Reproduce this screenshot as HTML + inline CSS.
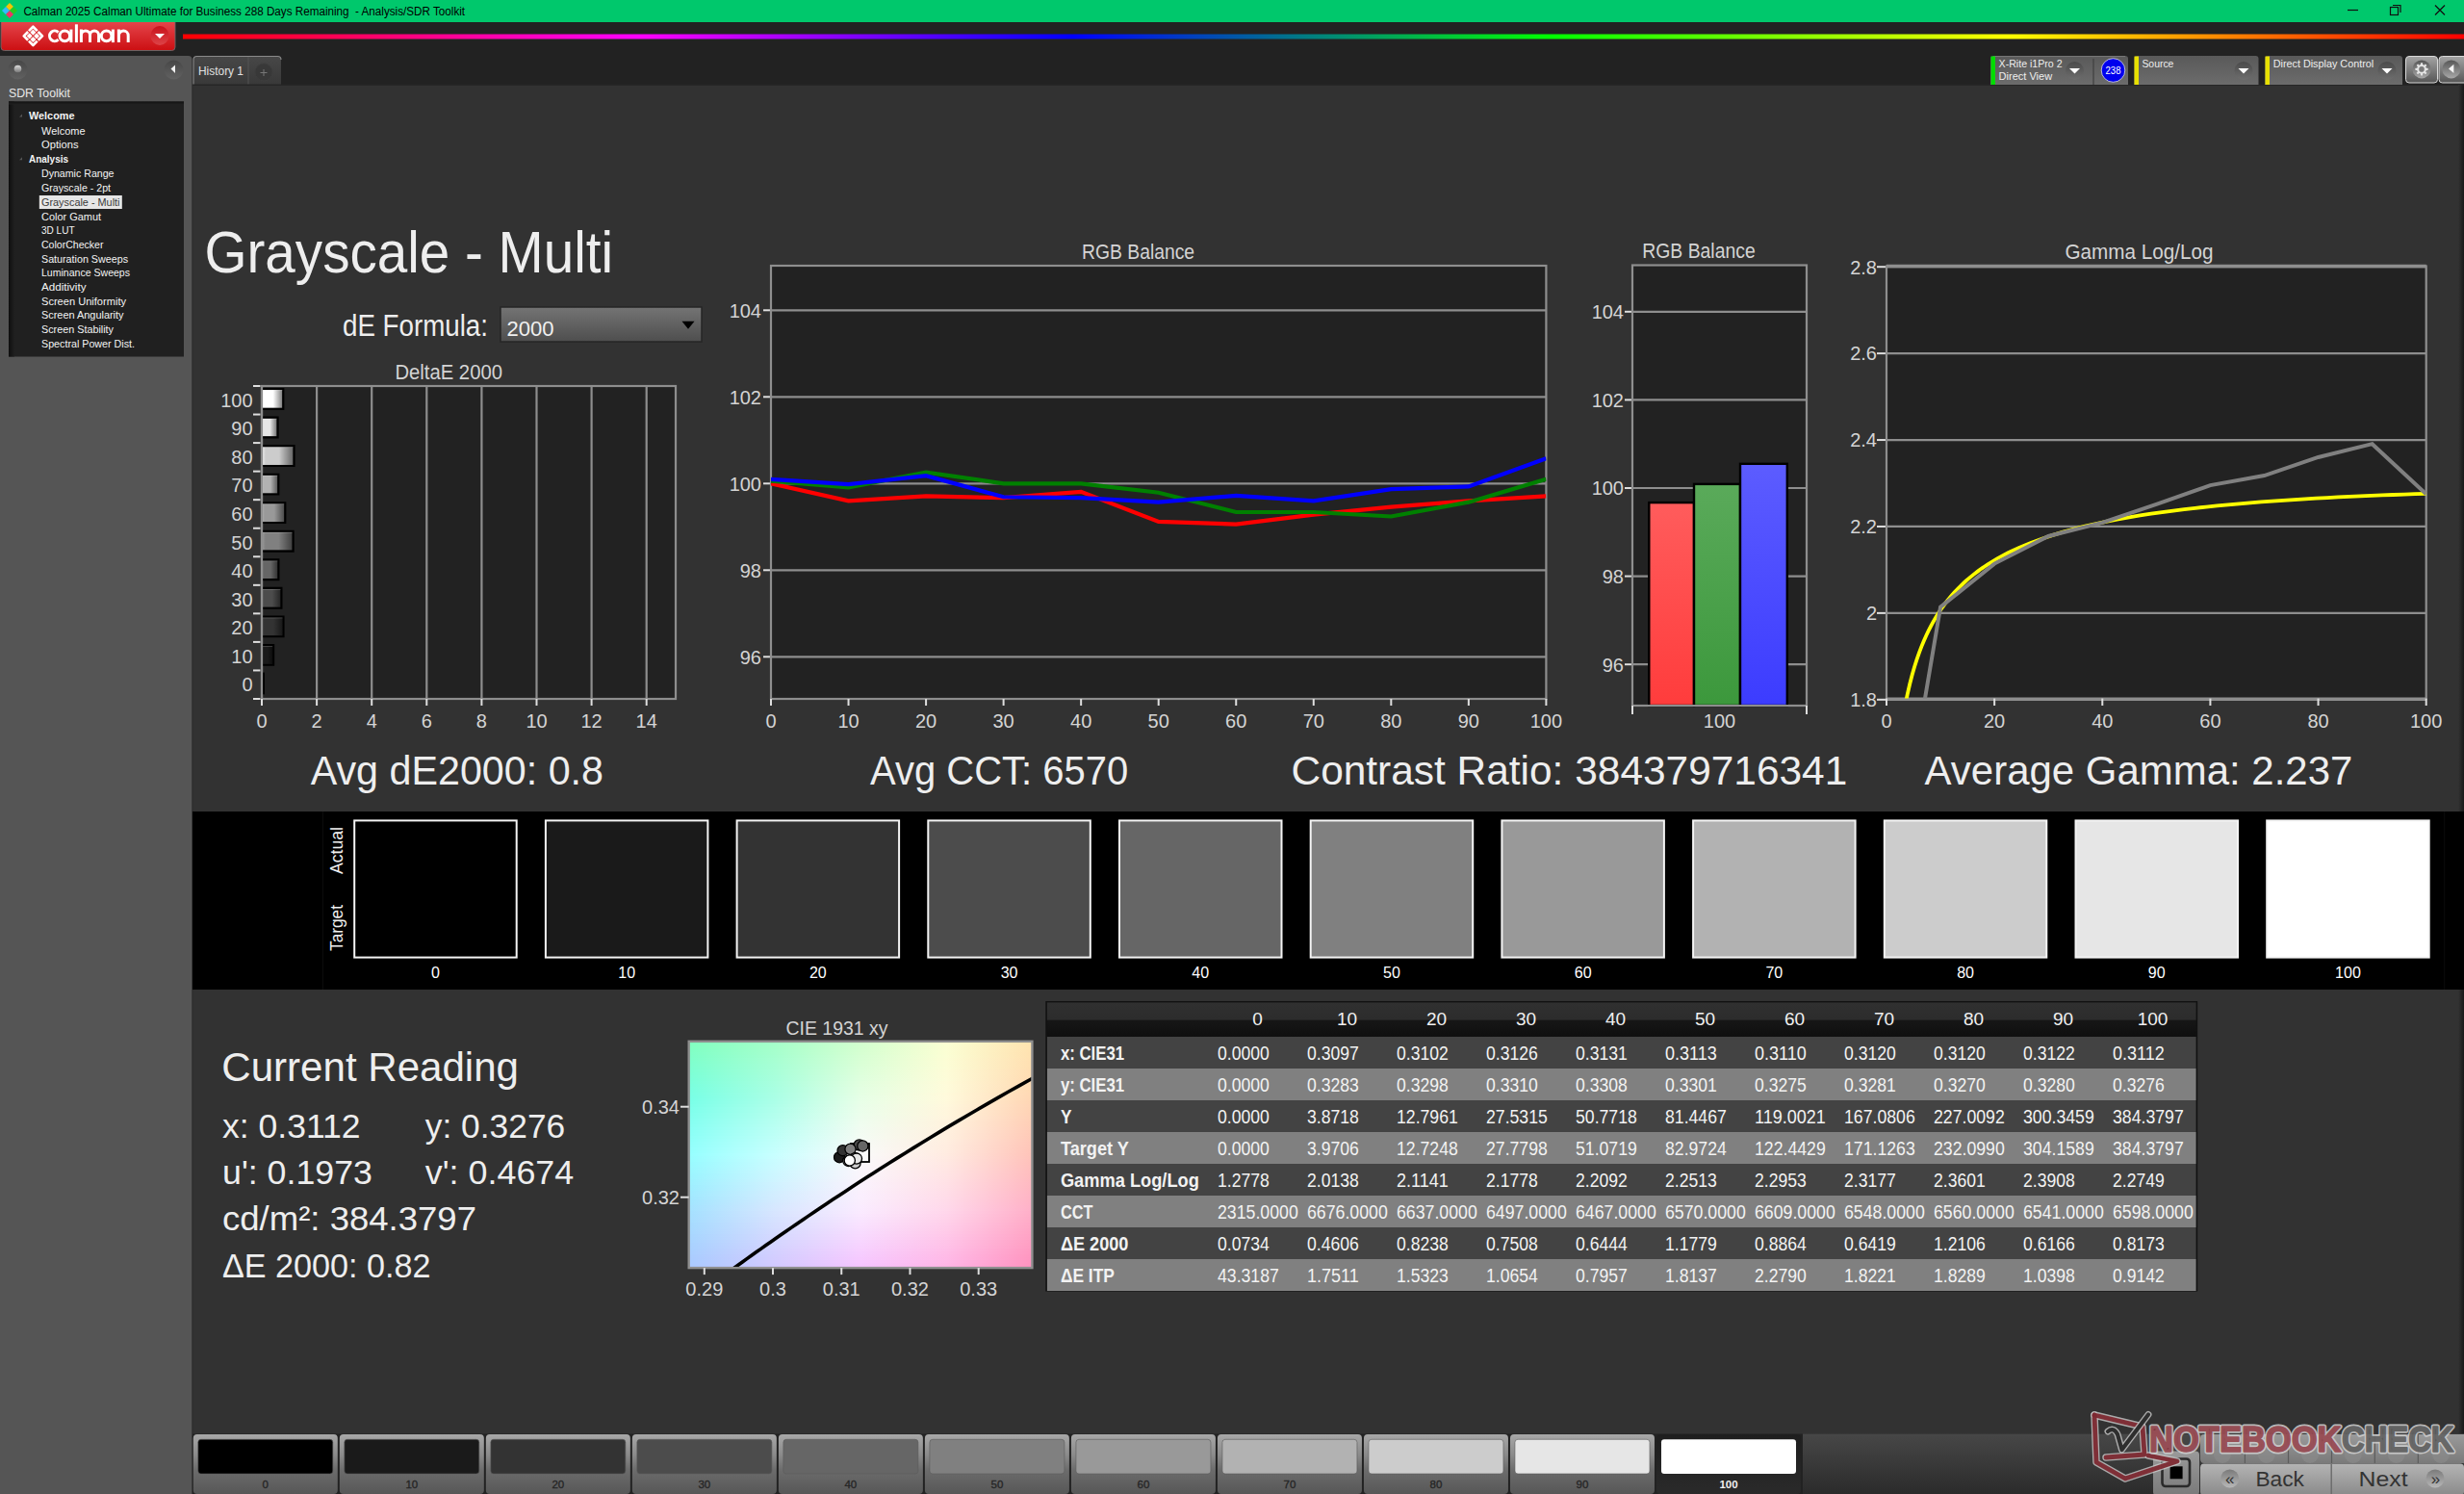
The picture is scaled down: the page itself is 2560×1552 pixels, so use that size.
<!DOCTYPE html><html><head><meta charset="utf-8"><style>html,body{margin:0;padding:0;background:#323232;overflow:hidden}svg{display:block}text{font-family:"Liberation Sans",sans-serif}</style></head><body><svg width="2560" height="1552" viewBox="0 0 2560 1552"><defs><linearGradient id="redbtn" x1="0" y1="0" x2="0" y2="1"><stop offset="0" stop-color="#e4444a"/><stop offset="1" stop-color="#cc0f12"/></linearGradient><linearGradient id="redcirc" x1="0" y1="0" x2="0" y2="1"><stop offset="0" stop-color="#c8101a"/><stop offset="1" stop-color="#dd4448"/></linearGradient><linearGradient id="rainbow" x1="0" y1="0" x2="1" y2="0"><stop offset="0" stop-color="#ff0000"/><stop offset="0.2" stop-color="#ff00ff"/><stop offset="0.39" stop-color="#0000ff"/><stop offset="0.6" stop-color="#00ff00"/><stop offset="0.8" stop-color="#ffff00"/><stop offset="1" stop-color="#ff0000"/></linearGradient><linearGradient id="sbcirc" x1="0" y1="0" x2="0" y2="1"><stop offset="0" stop-color="#474747"/><stop offset="1" stop-color="#616161"/></linearGradient><linearGradient id="sbdot" x1="0" y1="0" x2="0" y2="1"><stop offset="0" stop-color="#ddd"/><stop offset="1" stop-color="#777"/></linearGradient><linearGradient id="treeL" x1="0" y1="0" x2="1" y2="0"><stop offset="0" stop-color="#0e0e0e"/><stop offset="1" stop-color="#202020"/></linearGradient><linearGradient id="treeT" x1="0" y1="0" x2="0" y2="1"><stop offset="0" stop-color="#111"/><stop offset="1" stop-color="#202020"/></linearGradient><linearGradient id="tab" x1="0" y1="0" x2="0" y2="1"><stop offset="0" stop-color="#474747"/><stop offset="1" stop-color="#393939"/></linearGradient><linearGradient id="redge" x1="0" y1="0" x2="1" y2="0"><stop offset="0" stop-color="#323232"/><stop offset="1" stop-color="#181818"/></linearGradient><linearGradient id="panel" x1="0" y1="0" x2="0" y2="1"><stop offset="0" stop-color="#595959"/><stop offset="1" stop-color="#6c6c6c"/></linearGradient><linearGradient id="ddc" x1="0" y1="0" x2="0" y2="1"><stop offset="0" stop-color="#4a4a4a"/><stop offset="1" stop-color="#6e6e6e"/></linearGradient><linearGradient id="gbtn" x1="0" y1="0" x2="0" y2="1"><stop offset="0" stop-color="#a4a4a4"/><stop offset="1" stop-color="#565656"/></linearGradient><linearGradient id="gcirc" x1="0" y1="0" x2="0" y2="1"><stop offset="0" stop-color="#565656"/><stop offset="1" stop-color="#a8a8a8"/></linearGradient><linearGradient id="dd" x1="0" y1="0" x2="0" y2="1"><stop offset="0" stop-color="#747474"/><stop offset="1" stop-color="#4e4e4e"/></linearGradient><linearGradient id="bar0" x1="0" y1="0" x2="1" y2="0"><stop offset="0" stop-color="rgb(10,10,10)"/><stop offset="0.12" stop-color="rgb(0,0,0)"/><stop offset="0.55" stop-color="rgb(0,0,0)"/><stop offset="1" stop-color="rgb(0,0,0)"/></linearGradient><linearGradient id="bar1" x1="0" y1="0" x2="1" y2="0"><stop offset="0" stop-color="rgb(39,39,39)"/><stop offset="0.12" stop-color="rgb(26,26,26)"/><stop offset="0.55" stop-color="rgb(26,26,26)"/><stop offset="1" stop-color="rgb(13,13,13)"/></linearGradient><linearGradient id="bar2" x1="0" y1="0" x2="1" y2="0"><stop offset="0" stop-color="rgb(68,68,68)"/><stop offset="0.12" stop-color="rgb(51,51,51)"/><stop offset="0.55" stop-color="rgb(51,51,51)"/><stop offset="1" stop-color="rgb(25,25,25)"/></linearGradient><linearGradient id="bar3" x1="0" y1="0" x2="1" y2="0"><stop offset="0" stop-color="rgb(97,97,97)"/><stop offset="0.12" stop-color="rgb(76,76,76)"/><stop offset="0.55" stop-color="rgb(76,76,76)"/><stop offset="1" stop-color="rgb(38,38,38)"/></linearGradient><linearGradient id="bar4" x1="0" y1="0" x2="1" y2="0"><stop offset="0" stop-color="rgb(127,127,127)"/><stop offset="0.12" stop-color="rgb(102,102,102)"/><stop offset="0.55" stop-color="rgb(102,102,102)"/><stop offset="1" stop-color="rgb(51,51,51)"/></linearGradient><linearGradient id="bar5" x1="0" y1="0" x2="1" y2="0"><stop offset="0" stop-color="rgb(157,157,157)"/><stop offset="0.12" stop-color="rgb(128,128,128)"/><stop offset="0.55" stop-color="rgb(128,128,128)"/><stop offset="1" stop-color="rgb(64,64,64)"/></linearGradient><linearGradient id="bar6" x1="0" y1="0" x2="1" y2="0"><stop offset="0" stop-color="rgb(185,185,185)"/><stop offset="0.12" stop-color="rgb(153,153,153)"/><stop offset="0.55" stop-color="rgb(153,153,153)"/><stop offset="1" stop-color="rgb(76,76,76)"/></linearGradient><linearGradient id="bar7" x1="0" y1="0" x2="1" y2="0"><stop offset="0" stop-color="rgb(214,214,214)"/><stop offset="0.12" stop-color="rgb(178,178,178)"/><stop offset="0.55" stop-color="rgb(178,178,178)"/><stop offset="1" stop-color="rgb(89,89,89)"/></linearGradient><linearGradient id="bar8" x1="0" y1="0" x2="1" y2="0"><stop offset="0" stop-color="rgb(244,244,244)"/><stop offset="0.12" stop-color="rgb(204,204,204)"/><stop offset="0.55" stop-color="rgb(204,204,204)"/><stop offset="1" stop-color="rgb(102,102,102)"/></linearGradient><linearGradient id="bar9" x1="0" y1="0" x2="1" y2="0"><stop offset="0" stop-color="rgb(255,255,255)"/><stop offset="0.12" stop-color="rgb(230,230,230)"/><stop offset="0.55" stop-color="rgb(230,230,230)"/><stop offset="1" stop-color="rgb(115,115,115)"/></linearGradient><linearGradient id="bar10" x1="0" y1="0" x2="1" y2="0"><stop offset="0" stop-color="rgb(255,255,255)"/><stop offset="0.12" stop-color="rgb(255,255,255)"/><stop offset="0.55" stop-color="rgb(255,255,255)"/><stop offset="1" stop-color="rgb(127,127,127)"/></linearGradient><clipPath id="cliprgb"><rect x="801" y="276" width="805.4000000000001" height="450"/></clipPath><linearGradient id="rb" x1="0" y1="0" x2="0" y2="1"><stop offset="0" stop-color="#ff5c5c"/><stop offset="1" stop-color="#ff3c3c"/></linearGradient><linearGradient id="gb" x1="0" y1="0" x2="0" y2="1"><stop offset="0" stop-color="#5aaa5a"/><stop offset="1" stop-color="#3c983c"/></linearGradient><linearGradient id="bb" x1="0" y1="0" x2="0" y2="1"><stop offset="0" stop-color="#5c5cff"/><stop offset="1" stop-color="#3c3cff"/></linearGradient><clipPath id="clipg"><rect x="1960" y="276.5" width="560.6999999999998" height="449.1"/></clipPath><clipPath id="clipcie"><rect x="715.7" y="1081.8" width="356.70000000000005" height="235.29999999999995"/></clipPath><linearGradient id="cie0" x1="0" y1="0" x2="1" y2="0"><stop offset="0.0" stop-color="rgb(130,255,190)"/><stop offset="0.25" stop-color="rgb(165,255,200)"/><stop offset="0.5" stop-color="rgb(210,255,205)"/><stop offset="0.75" stop-color="rgb(250,255,210)"/><stop offset="1.0" stop-color="rgb(255,228,175)"/></linearGradient><linearGradient id="cie1" x1="0" y1="0" x2="1" y2="0"><stop offset="0.0" stop-color="rgb(129,255,193)"/><stop offset="0.25" stop-color="rgb(165,255,202)"/><stop offset="0.5" stop-color="rgb(211,255,207)"/><stop offset="0.75" stop-color="rgb(250,255,211)"/><stop offset="1.0" stop-color="rgb(255,227,175)"/></linearGradient><linearGradient id="cie2" x1="0" y1="0" x2="1" y2="0"><stop offset="0.0" stop-color="rgb(129,255,195)"/><stop offset="0.25" stop-color="rgb(166,255,203)"/><stop offset="0.5" stop-color="rgb(212,255,208)"/><stop offset="0.75" stop-color="rgb(251,254,211)"/><stop offset="1.0" stop-color="rgb(255,227,176)"/></linearGradient><linearGradient id="cie3" x1="0" y1="0" x2="1" y2="0"><stop offset="0.0" stop-color="rgb(128,255,197)"/><stop offset="0.25" stop-color="rgb(166,255,205)"/><stop offset="0.5" stop-color="rgb(213,255,209)"/><stop offset="0.75" stop-color="rgb(251,254,212)"/><stop offset="1.0" stop-color="rgb(255,226,176)"/></linearGradient><linearGradient id="cie4" x1="0" y1="0" x2="1" y2="0"><stop offset="0.0" stop-color="rgb(128,255,199)"/><stop offset="0.25" stop-color="rgb(166,255,206)"/><stop offset="0.5" stop-color="rgb(214,255,210)"/><stop offset="0.75" stop-color="rgb(251,254,212)"/><stop offset="1.0" stop-color="rgb(255,225,176)"/></linearGradient><linearGradient id="cie5" x1="0" y1="0" x2="1" y2="0"><stop offset="0.0" stop-color="rgb(127,255,201)"/><stop offset="0.25" stop-color="rgb(166,255,208)"/><stop offset="0.5" stop-color="rgb(215,255,212)"/><stop offset="0.75" stop-color="rgb(251,254,213)"/><stop offset="1.0" stop-color="rgb(255,225,176)"/></linearGradient><linearGradient id="cie6" x1="0" y1="0" x2="1" y2="0"><stop offset="0.0" stop-color="rgb(127,255,203)"/><stop offset="0.25" stop-color="rgb(167,255,210)"/><stop offset="0.5" stop-color="rgb(216,255,213)"/><stop offset="0.75" stop-color="rgb(252,253,213)"/><stop offset="1.0" stop-color="rgb(255,224,177)"/></linearGradient><linearGradient id="cie7" x1="0" y1="0" x2="1" y2="0"><stop offset="0.0" stop-color="rgb(126,255,205)"/><stop offset="0.25" stop-color="rgb(167,255,211)"/><stop offset="0.5" stop-color="rgb(217,255,214)"/><stop offset="0.75" stop-color="rgb(252,253,214)"/><stop offset="1.0" stop-color="rgb(255,223,177)"/></linearGradient><linearGradient id="cie8" x1="0" y1="0" x2="1" y2="0"><stop offset="0.0" stop-color="rgb(126,255,207)"/><stop offset="0.25" stop-color="rgb(167,255,213)"/><stop offset="0.5" stop-color="rgb(218,255,215)"/><stop offset="0.75" stop-color="rgb(252,253,214)"/><stop offset="1.0" stop-color="rgb(255,223,177)"/></linearGradient><linearGradient id="cie9" x1="0" y1="0" x2="1" y2="0"><stop offset="0.0" stop-color="rgb(125,255,209)"/><stop offset="0.25" stop-color="rgb(167,255,214)"/><stop offset="0.5" stop-color="rgb(219,255,217)"/><stop offset="0.75" stop-color="rgb(252,253,215)"/><stop offset="1.0" stop-color="rgb(255,222,177)"/></linearGradient><linearGradient id="cie10" x1="0" y1="0" x2="1" y2="0"><stop offset="0.0" stop-color="rgb(125,255,211)"/><stop offset="0.25" stop-color="rgb(168,255,216)"/><stop offset="0.5" stop-color="rgb(220,255,218)"/><stop offset="0.75" stop-color="rgb(253,252,215)"/><stop offset="1.0" stop-color="rgb(255,221,178)"/></linearGradient><linearGradient id="cie11" x1="0" y1="0" x2="1" y2="0"><stop offset="0.0" stop-color="rgb(124,255,213)"/><stop offset="0.25" stop-color="rgb(168,255,217)"/><stop offset="0.5" stop-color="rgb(221,255,219)"/><stop offset="0.75" stop-color="rgb(253,252,216)"/><stop offset="1.0" stop-color="rgb(255,221,178)"/></linearGradient><linearGradient id="cie12" x1="0" y1="0" x2="1" y2="0"><stop offset="0.0" stop-color="rgb(124,255,215)"/><stop offset="0.25" stop-color="rgb(168,255,219)"/><stop offset="0.5" stop-color="rgb(222,255,221)"/><stop offset="0.75" stop-color="rgb(253,252,216)"/><stop offset="1.0" stop-color="rgb(255,220,178)"/></linearGradient><linearGradient id="cie13" x1="0" y1="0" x2="1" y2="0"><stop offset="0.0" stop-color="rgb(123,255,217)"/><stop offset="0.25" stop-color="rgb(168,255,220)"/><stop offset="0.5" stop-color="rgb(223,255,222)"/><stop offset="0.75" stop-color="rgb(253,252,217)"/><stop offset="1.0" stop-color="rgb(255,219,178)"/></linearGradient><linearGradient id="cie14" x1="0" y1="0" x2="1" y2="0"><stop offset="0.0" stop-color="rgb(123,255,219)"/><stop offset="0.25" stop-color="rgb(169,255,222)"/><stop offset="0.5" stop-color="rgb(225,255,223)"/><stop offset="0.75" stop-color="rgb(254,251,217)"/><stop offset="1.0" stop-color="rgb(255,219,179)"/></linearGradient><linearGradient id="cie15" x1="0" y1="0" x2="1" y2="0"><stop offset="0.0" stop-color="rgb(122,255,221)"/><stop offset="0.25" stop-color="rgb(169,255,223)"/><stop offset="0.5" stop-color="rgb(226,255,224)"/><stop offset="0.75" stop-color="rgb(254,251,218)"/><stop offset="1.0" stop-color="rgb(255,218,179)"/></linearGradient><linearGradient id="cie16" x1="0" y1="0" x2="1" y2="0"><stop offset="0.0" stop-color="rgb(122,255,223)"/><stop offset="0.25" stop-color="rgb(169,255,225)"/><stop offset="0.5" stop-color="rgb(227,255,226)"/><stop offset="0.75" stop-color="rgb(254,251,218)"/><stop offset="1.0" stop-color="rgb(255,217,179)"/></linearGradient><linearGradient id="cie17" x1="0" y1="0" x2="1" y2="0"><stop offset="0.0" stop-color="rgb(121,255,225)"/><stop offset="0.25" stop-color="rgb(169,255,226)"/><stop offset="0.5" stop-color="rgb(228,255,227)"/><stop offset="0.75" stop-color="rgb(254,251,219)"/><stop offset="1.0" stop-color="rgb(255,217,179)"/></linearGradient><linearGradient id="cie18" x1="0" y1="0" x2="1" y2="0"><stop offset="0.0" stop-color="rgb(121,255,227)"/><stop offset="0.25" stop-color="rgb(170,255,228)"/><stop offset="0.5" stop-color="rgb(229,255,228)"/><stop offset="0.75" stop-color="rgb(255,250,219)"/><stop offset="1.0" stop-color="rgb(255,216,180)"/></linearGradient><linearGradient id="cie19" x1="0" y1="0" x2="1" y2="0"><stop offset="0.0" stop-color="rgb(120,255,229)"/><stop offset="0.25" stop-color="rgb(170,255,229)"/><stop offset="0.5" stop-color="rgb(230,255,230)"/><stop offset="0.75" stop-color="rgb(255,250,220)"/><stop offset="1.0" stop-color="rgb(255,215,180)"/></linearGradient><linearGradient id="cie20" x1="0" y1="0" x2="1" y2="0"><stop offset="0.0" stop-color="rgb(121,255,231)"/><stop offset="0.25" stop-color="rgb(171,255,231)"/><stop offset="0.5" stop-color="rgb(231,255,231)"/><stop offset="0.75" stop-color="rgb(255,250,220)"/><stop offset="1.0" stop-color="rgb(255,214,180)"/></linearGradient><linearGradient id="cie21" x1="0" y1="0" x2="1" y2="0"><stop offset="0.0" stop-color="rgb(122,255,232)"/><stop offset="0.25" stop-color="rgb(172,255,232)"/><stop offset="0.5" stop-color="rgb(232,255,232)"/><stop offset="0.75" stop-color="rgb(255,249,220)"/><stop offset="1.0" stop-color="rgb(255,213,180)"/></linearGradient><linearGradient id="cie22" x1="0" y1="0" x2="1" y2="0"><stop offset="0.0" stop-color="rgb(124,255,233)"/><stop offset="0.25" stop-color="rgb(174,255,233)"/><stop offset="0.5" stop-color="rgb(233,254,233)"/><stop offset="0.75" stop-color="rgb(255,248,221)"/><stop offset="1.0" stop-color="rgb(255,212,181)"/></linearGradient><linearGradient id="cie23" x1="0" y1="0" x2="1" y2="0"><stop offset="0.0" stop-color="rgb(126,255,235)"/><stop offset="0.25" stop-color="rgb(176,255,235)"/><stop offset="0.5" stop-color="rgb(234,254,234)"/><stop offset="0.75" stop-color="rgb(255,247,221)"/><stop offset="1.0" stop-color="rgb(255,211,181)"/></linearGradient><linearGradient id="cie24" x1="0" y1="0" x2="1" y2="0"><stop offset="0.0" stop-color="rgb(127,255,236)"/><stop offset="0.25" stop-color="rgb(177,255,236)"/><stop offset="0.5" stop-color="rgb(235,254,235)"/><stop offset="0.75" stop-color="rgb(255,246,221)"/><stop offset="1.0" stop-color="rgb(255,210,181)"/></linearGradient><linearGradient id="cie25" x1="0" y1="0" x2="1" y2="0"><stop offset="0.0" stop-color="rgb(129,255,237)"/><stop offset="0.25" stop-color="rgb(179,255,237)"/><stop offset="0.5" stop-color="rgb(236,254,236)"/><stop offset="0.75" stop-color="rgb(255,246,221)"/><stop offset="1.0" stop-color="rgb(255,209,181)"/></linearGradient><linearGradient id="cie26" x1="0" y1="0" x2="1" y2="0"><stop offset="0.0" stop-color="rgb(130,255,238)"/><stop offset="0.25" stop-color="rgb(180,255,238)"/><stop offset="0.5" stop-color="rgb(237,253,237)"/><stop offset="0.75" stop-color="rgb(255,245,222)"/><stop offset="1.0" stop-color="rgb(255,208,182)"/></linearGradient><linearGradient id="cie27" x1="0" y1="0" x2="1" y2="0"><stop offset="0.0" stop-color="rgb(132,255,240)"/><stop offset="0.25" stop-color="rgb(182,255,240)"/><stop offset="0.5" stop-color="rgb(238,253,238)"/><stop offset="0.75" stop-color="rgb(255,244,222)"/><stop offset="1.0" stop-color="rgb(255,207,182)"/></linearGradient><linearGradient id="cie28" x1="0" y1="0" x2="1" y2="0"><stop offset="0.0" stop-color="rgb(133,255,241)"/><stop offset="0.25" stop-color="rgb(183,255,241)"/><stop offset="0.5" stop-color="rgb(239,253,239)"/><stop offset="0.75" stop-color="rgb(255,243,222)"/><stop offset="1.0" stop-color="rgb(255,206,182)"/></linearGradient><linearGradient id="cie29" x1="0" y1="0" x2="1" y2="0"><stop offset="0.0" stop-color="rgb(135,255,242)"/><stop offset="0.25" stop-color="rgb(185,255,242)"/><stop offset="0.5" stop-color="rgb(240,253,240)"/><stop offset="0.75" stop-color="rgb(255,243,222)"/><stop offset="1.0" stop-color="rgb(255,205,182)"/></linearGradient><linearGradient id="cie30" x1="0" y1="0" x2="1" y2="0"><stop offset="0.0" stop-color="rgb(136,255,244)"/><stop offset="0.25" stop-color="rgb(186,255,244)"/><stop offset="0.5" stop-color="rgb(241,252,241)"/><stop offset="0.75" stop-color="rgb(255,242,223)"/><stop offset="1.0" stop-color="rgb(255,204,183)"/></linearGradient><linearGradient id="cie31" x1="0" y1="0" x2="1" y2="0"><stop offset="0.0" stop-color="rgb(138,255,245)"/><stop offset="0.25" stop-color="rgb(188,255,245)"/><stop offset="0.5" stop-color="rgb(242,252,242)"/><stop offset="0.75" stop-color="rgb(255,241,223)"/><stop offset="1.0" stop-color="rgb(255,203,183)"/></linearGradient><linearGradient id="cie32" x1="0" y1="0" x2="1" y2="0"><stop offset="0.0" stop-color="rgb(139,255,246)"/><stop offset="0.25" stop-color="rgb(189,255,246)"/><stop offset="0.5" stop-color="rgb(243,252,243)"/><stop offset="0.75" stop-color="rgb(255,240,223)"/><stop offset="1.0" stop-color="rgb(255,202,183)"/></linearGradient><linearGradient id="cie33" x1="0" y1="0" x2="1" y2="0"><stop offset="0.0" stop-color="rgb(141,255,247)"/><stop offset="0.25" stop-color="rgb(191,255,247)"/><stop offset="0.5" stop-color="rgb(244,252,244)"/><stop offset="0.75" stop-color="rgb(255,240,223)"/><stop offset="1.0" stop-color="rgb(255,201,183)"/></linearGradient><linearGradient id="cie34" x1="0" y1="0" x2="1" y2="0"><stop offset="0.0" stop-color="rgb(142,255,249)"/><stop offset="0.25" stop-color="rgb(192,255,249)"/><stop offset="0.5" stop-color="rgb(245,251,245)"/><stop offset="0.75" stop-color="rgb(255,239,224)"/><stop offset="1.0" stop-color="rgb(255,200,184)"/></linearGradient><linearGradient id="cie35" x1="0" y1="0" x2="1" y2="0"><stop offset="0.0" stop-color="rgb(144,255,250)"/><stop offset="0.25" stop-color="rgb(194,255,250)"/><stop offset="0.5" stop-color="rgb(246,251,246)"/><stop offset="0.75" stop-color="rgb(255,238,224)"/><stop offset="1.0" stop-color="rgb(255,199,184)"/></linearGradient><linearGradient id="cie36" x1="0" y1="0" x2="1" y2="0"><stop offset="0.0" stop-color="rgb(145,255,251)"/><stop offset="0.25" stop-color="rgb(195,255,251)"/><stop offset="0.5" stop-color="rgb(247,251,247)"/><stop offset="0.75" stop-color="rgb(255,237,224)"/><stop offset="1.0" stop-color="rgb(255,198,184)"/></linearGradient><linearGradient id="cie37" x1="0" y1="0" x2="1" y2="0"><stop offset="0.0" stop-color="rgb(147,255,252)"/><stop offset="0.25" stop-color="rgb(197,255,252)"/><stop offset="0.5" stop-color="rgb(248,251,248)"/><stop offset="0.75" stop-color="rgb(255,237,224)"/><stop offset="1.0" stop-color="rgb(255,197,184)"/></linearGradient><linearGradient id="cie38" x1="0" y1="0" x2="1" y2="0"><stop offset="0.0" stop-color="rgb(148,255,254)"/><stop offset="0.25" stop-color="rgb(198,255,254)"/><stop offset="0.5" stop-color="rgb(249,250,249)"/><stop offset="0.75" stop-color="rgb(255,236,225)"/><stop offset="1.0" stop-color="rgb(255,196,185)"/></linearGradient><linearGradient id="cie39" x1="0" y1="0" x2="1" y2="0"><stop offset="0.0" stop-color="rgb(150,255,255)"/><stop offset="0.25" stop-color="rgb(200,255,255)"/><stop offset="0.5" stop-color="rgb(250,250,250)"/><stop offset="0.75" stop-color="rgb(255,235,225)"/><stop offset="1.0" stop-color="rgb(255,195,185)"/></linearGradient><linearGradient id="cie40" x1="0" y1="0" x2="1" y2="0"><stop offset="0.0" stop-color="rgb(151,253,255)"/><stop offset="0.25" stop-color="rgb(201,254,255)"/><stop offset="0.5" stop-color="rgb(250,249,250)"/><stop offset="0.75" stop-color="rgb(255,234,226)"/><stop offset="1.0" stop-color="rgb(255,194,186)"/></linearGradient><linearGradient id="cie41" x1="0" y1="0" x2="1" y2="0"><stop offset="0.0" stop-color="rgb(152,252,255)"/><stop offset="0.25" stop-color="rgb(202,252,255)"/><stop offset="0.5" stop-color="rgb(250,248,251)"/><stop offset="0.75" stop-color="rgb(255,233,226)"/><stop offset="1.0" stop-color="rgb(255,193,187)"/></linearGradient><linearGradient id="cie42" x1="0" y1="0" x2="1" y2="0"><stop offset="0.0" stop-color="rgb(152,250,255)"/><stop offset="0.25" stop-color="rgb(202,251,255)"/><stop offset="0.5" stop-color="rgb(250,248,251)"/><stop offset="0.75" stop-color="rgb(255,232,227)"/><stop offset="1.0" stop-color="rgb(255,192,187)"/></linearGradient><linearGradient id="cie43" x1="0" y1="0" x2="1" y2="0"><stop offset="0.0" stop-color="rgb(153,249,255)"/><stop offset="0.25" stop-color="rgb(203,250,255)"/><stop offset="0.5" stop-color="rgb(250,247,251)"/><stop offset="0.75" stop-color="rgb(255,231,227)"/><stop offset="1.0" stop-color="rgb(255,191,188)"/></linearGradient><linearGradient id="cie44" x1="0" y1="0" x2="1" y2="0"><stop offset="0.0" stop-color="rgb(154,247,255)"/><stop offset="0.25" stop-color="rgb(204,249,255)"/><stop offset="0.5" stop-color="rgb(250,246,251)"/><stop offset="0.75" stop-color="rgb(255,230,228)"/><stop offset="1.0" stop-color="rgb(255,190,189)"/></linearGradient><linearGradient id="cie45" x1="0" y1="0" x2="1" y2="0"><stop offset="0.0" stop-color="rgb(155,246,255)"/><stop offset="0.25" stop-color="rgb(205,247,255)"/><stop offset="0.5" stop-color="rgb(250,245,252)"/><stop offset="0.75" stop-color="rgb(255,229,228)"/><stop offset="1.0" stop-color="rgb(255,189,190)"/></linearGradient><linearGradient id="cie46" x1="0" y1="0" x2="1" y2="0"><stop offset="0.0" stop-color="rgb(155,244,255)"/><stop offset="0.25" stop-color="rgb(205,246,255)"/><stop offset="0.5" stop-color="rgb(250,245,252)"/><stop offset="0.75" stop-color="rgb(255,228,229)"/><stop offset="1.0" stop-color="rgb(255,188,190)"/></linearGradient><linearGradient id="cie47" x1="0" y1="0" x2="1" y2="0"><stop offset="0.0" stop-color="rgb(156,243,255)"/><stop offset="0.25" stop-color="rgb(206,245,255)"/><stop offset="0.5" stop-color="rgb(250,244,252)"/><stop offset="0.75" stop-color="rgb(255,227,229)"/><stop offset="1.0" stop-color="rgb(255,187,191)"/></linearGradient><linearGradient id="cie48" x1="0" y1="0" x2="1" y2="0"><stop offset="0.0" stop-color="rgb(157,241,255)"/><stop offset="0.25" stop-color="rgb(207,244,255)"/><stop offset="0.5" stop-color="rgb(250,243,252)"/><stop offset="0.75" stop-color="rgb(255,226,230)"/><stop offset="1.0" stop-color="rgb(255,186,192)"/></linearGradient><linearGradient id="cie49" x1="0" y1="0" x2="1" y2="0"><stop offset="0.0" stop-color="rgb(158,240,255)"/><stop offset="0.25" stop-color="rgb(208,242,255)"/><stop offset="0.5" stop-color="rgb(250,242,253)"/><stop offset="0.75" stop-color="rgb(255,225,230)"/><stop offset="1.0" stop-color="rgb(255,185,193)"/></linearGradient><linearGradient id="cie50" x1="0" y1="0" x2="1" y2="0"><stop offset="0.0" stop-color="rgb(158,238,255)"/><stop offset="0.25" stop-color="rgb(208,241,255)"/><stop offset="0.5" stop-color="rgb(250,242,253)"/><stop offset="0.75" stop-color="rgb(255,224,231)"/><stop offset="1.0" stop-color="rgb(255,184,193)"/></linearGradient><linearGradient id="cie51" x1="0" y1="0" x2="1" y2="0"><stop offset="0.0" stop-color="rgb(159,237,255)"/><stop offset="0.25" stop-color="rgb(209,240,255)"/><stop offset="0.5" stop-color="rgb(250,241,253)"/><stop offset="0.75" stop-color="rgb(255,223,231)"/><stop offset="1.0" stop-color="rgb(255,183,194)"/></linearGradient><linearGradient id="cie52" x1="0" y1="0" x2="1" y2="0"><stop offset="0.0" stop-color="rgb(160,235,255)"/><stop offset="0.25" stop-color="rgb(210,238,255)"/><stop offset="0.5" stop-color="rgb(250,240,253)"/><stop offset="0.75" stop-color="rgb(255,222,232)"/><stop offset="1.0" stop-color="rgb(255,182,195)"/></linearGradient><linearGradient id="cie53" x1="0" y1="0" x2="1" y2="0"><stop offset="0.0" stop-color="rgb(161,234,255)"/><stop offset="0.25" stop-color="rgb(211,237,255)"/><stop offset="0.5" stop-color="rgb(250,239,254)"/><stop offset="0.75" stop-color="rgb(255,221,232)"/><stop offset="1.0" stop-color="rgb(255,181,196)"/></linearGradient><linearGradient id="cie54" x1="0" y1="0" x2="1" y2="0"><stop offset="0.0" stop-color="rgb(161,232,255)"/><stop offset="0.25" stop-color="rgb(211,236,255)"/><stop offset="0.5" stop-color="rgb(250,239,254)"/><stop offset="0.75" stop-color="rgb(255,220,233)"/><stop offset="1.0" stop-color="rgb(255,180,196)"/></linearGradient><linearGradient id="cie55" x1="0" y1="0" x2="1" y2="0"><stop offset="0.0" stop-color="rgb(162,230,255)"/><stop offset="0.25" stop-color="rgb(212,235,255)"/><stop offset="0.5" stop-color="rgb(250,238,254)"/><stop offset="0.75" stop-color="rgb(255,219,233)"/><stop offset="1.0" stop-color="rgb(255,179,197)"/></linearGradient><linearGradient id="cie56" x1="0" y1="0" x2="1" y2="0"><stop offset="0.0" stop-color="rgb(163,229,255)"/><stop offset="0.25" stop-color="rgb(213,233,255)"/><stop offset="0.5" stop-color="rgb(250,237,254)"/><stop offset="0.75" stop-color="rgb(255,218,234)"/><stop offset="1.0" stop-color="rgb(255,178,198)"/></linearGradient><linearGradient id="cie57" x1="0" y1="0" x2="1" y2="0"><stop offset="0.0" stop-color="rgb(164,227,255)"/><stop offset="0.25" stop-color="rgb(214,232,255)"/><stop offset="0.5" stop-color="rgb(250,236,255)"/><stop offset="0.75" stop-color="rgb(255,217,234)"/><stop offset="1.0" stop-color="rgb(255,177,199)"/></linearGradient><linearGradient id="cie58" x1="0" y1="0" x2="1" y2="0"><stop offset="0.0" stop-color="rgb(165,226,255)"/><stop offset="0.25" stop-color="rgb(215,231,255)"/><stop offset="0.5" stop-color="rgb(250,235,255)"/><stop offset="0.75" stop-color="rgb(255,216,235)"/><stop offset="1.0" stop-color="rgb(255,176,200)"/></linearGradient><linearGradient id="cie59" x1="0" y1="0" x2="1" y2="0"><stop offset="0.0" stop-color="rgb(165,224,255)"/><stop offset="0.25" stop-color="rgb(215,229,255)"/><stop offset="0.5" stop-color="rgb(250,234,255)"/><stop offset="0.75" stop-color="rgb(255,214,235)"/><stop offset="1.0" stop-color="rgb(255,174,200)"/></linearGradient><linearGradient id="cie60" x1="0" y1="0" x2="1" y2="0"><stop offset="0.0" stop-color="rgb(165,223,255)"/><stop offset="0.25" stop-color="rgb(215,228,255)"/><stop offset="0.5" stop-color="rgb(250,232,255)"/><stop offset="0.75" stop-color="rgb(255,212,235)"/><stop offset="1.0" stop-color="rgb(255,173,199)"/></linearGradient><linearGradient id="cie61" x1="0" y1="0" x2="1" y2="0"><stop offset="0.0" stop-color="rgb(166,222,255)"/><stop offset="0.25" stop-color="rgb(214,226,255)"/><stop offset="0.5" stop-color="rgb(249,230,255)"/><stop offset="0.75" stop-color="rgb(255,211,234)"/><stop offset="1.0" stop-color="rgb(255,171,199)"/></linearGradient><linearGradient id="cie62" x1="0" y1="0" x2="1" y2="0"><stop offset="0.0" stop-color="rgb(166,221,255)"/><stop offset="0.25" stop-color="rgb(214,225,255)"/><stop offset="0.5" stop-color="rgb(249,228,255)"/><stop offset="0.75" stop-color="rgb(255,209,234)"/><stop offset="1.0" stop-color="rgb(255,170,198)"/></linearGradient><linearGradient id="cie63" x1="0" y1="0" x2="1" y2="0"><stop offset="0.0" stop-color="rgb(166,219,255)"/><stop offset="0.25" stop-color="rgb(214,223,255)"/><stop offset="0.5" stop-color="rgb(249,226,255)"/><stop offset="0.75" stop-color="rgb(255,207,234)"/><stop offset="1.0" stop-color="rgb(255,168,198)"/></linearGradient><linearGradient id="cie64" x1="0" y1="0" x2="1" y2="0"><stop offset="0.0" stop-color="rgb(166,218,255)"/><stop offset="0.25" stop-color="rgb(214,222,255)"/><stop offset="0.5" stop-color="rgb(249,224,255)"/><stop offset="0.75" stop-color="rgb(255,205,234)"/><stop offset="1.0" stop-color="rgb(255,167,197)"/></linearGradient><linearGradient id="cie65" x1="0" y1="0" x2="1" y2="0"><stop offset="0.0" stop-color="rgb(167,217,255)"/><stop offset="0.25" stop-color="rgb(213,220,255)"/><stop offset="0.5" stop-color="rgb(248,222,255)"/><stop offset="0.75" stop-color="rgb(255,204,233)"/><stop offset="1.0" stop-color="rgb(255,165,197)"/></linearGradient><linearGradient id="cie66" x1="0" y1="0" x2="1" y2="0"><stop offset="0.0" stop-color="rgb(167,216,255)"/><stop offset="0.25" stop-color="rgb(213,219,255)"/><stop offset="0.5" stop-color="rgb(248,220,255)"/><stop offset="0.75" stop-color="rgb(255,202,233)"/><stop offset="1.0" stop-color="rgb(255,164,196)"/></linearGradient><linearGradient id="cie67" x1="0" y1="0" x2="1" y2="0"><stop offset="0.0" stop-color="rgb(167,214,255)"/><stop offset="0.25" stop-color="rgb(213,217,255)"/><stop offset="0.5" stop-color="rgb(248,218,255)"/><stop offset="0.75" stop-color="rgb(255,200,233)"/><stop offset="1.0" stop-color="rgb(255,162,196)"/></linearGradient><linearGradient id="cie68" x1="0" y1="0" x2="1" y2="0"><stop offset="0.0" stop-color="rgb(167,213,255)"/><stop offset="0.25" stop-color="rgb(213,216,255)"/><stop offset="0.5" stop-color="rgb(248,216,255)"/><stop offset="0.75" stop-color="rgb(255,198,233)"/><stop offset="1.0" stop-color="rgb(255,161,195)"/></linearGradient><linearGradient id="cie69" x1="0" y1="0" x2="1" y2="0"><stop offset="0.0" stop-color="rgb(168,212,255)"/><stop offset="0.25" stop-color="rgb(212,214,255)"/><stop offset="0.5" stop-color="rgb(247,214,255)"/><stop offset="0.75" stop-color="rgb(255,196,232)"/><stop offset="1.0" stop-color="rgb(255,159,195)"/></linearGradient><linearGradient id="cie70" x1="0" y1="0" x2="1" y2="0"><stop offset="0.0" stop-color="rgb(168,210,255)"/><stop offset="0.25" stop-color="rgb(212,213,255)"/><stop offset="0.5" stop-color="rgb(247,212,255)"/><stop offset="0.75" stop-color="rgb(255,195,232)"/><stop offset="1.0" stop-color="rgb(255,158,194)"/></linearGradient><linearGradient id="cie71" x1="0" y1="0" x2="1" y2="0"><stop offset="0.0" stop-color="rgb(168,209,255)"/><stop offset="0.25" stop-color="rgb(212,211,255)"/><stop offset="0.5" stop-color="rgb(247,210,255)"/><stop offset="0.75" stop-color="rgb(255,193,232)"/><stop offset="1.0" stop-color="rgb(255,156,194)"/></linearGradient><linearGradient id="cie72" x1="0" y1="0" x2="1" y2="0"><stop offset="0.0" stop-color="rgb(168,208,255)"/><stop offset="0.25" stop-color="rgb(212,209,255)"/><stop offset="0.5" stop-color="rgb(247,208,255)"/><stop offset="0.75" stop-color="rgb(255,191,232)"/><stop offset="1.0" stop-color="rgb(255,154,193)"/></linearGradient><linearGradient id="cie73" x1="0" y1="0" x2="1" y2="0"><stop offset="0.0" stop-color="rgb(169,207,255)"/><stop offset="0.25" stop-color="rgb(211,208,255)"/><stop offset="0.5" stop-color="rgb(246,206,255)"/><stop offset="0.75" stop-color="rgb(255,189,231)"/><stop offset="1.0" stop-color="rgb(255,153,193)"/></linearGradient><linearGradient id="cie74" x1="0" y1="0" x2="1" y2="0"><stop offset="0.0" stop-color="rgb(169,205,255)"/><stop offset="0.25" stop-color="rgb(211,206,255)"/><stop offset="0.5" stop-color="rgb(246,204,255)"/><stop offset="0.75" stop-color="rgb(255,187,231)"/><stop offset="1.0" stop-color="rgb(255,151,192)"/></linearGradient><linearGradient id="cie75" x1="0" y1="0" x2="1" y2="0"><stop offset="0.0" stop-color="rgb(169,204,255)"/><stop offset="0.25" stop-color="rgb(211,205,255)"/><stop offset="0.5" stop-color="rgb(246,202,255)"/><stop offset="0.75" stop-color="rgb(255,186,231)"/><stop offset="1.0" stop-color="rgb(255,150,192)"/></linearGradient><linearGradient id="cie76" x1="0" y1="0" x2="1" y2="0"><stop offset="0.0" stop-color="rgb(169,203,255)"/><stop offset="0.25" stop-color="rgb(211,203,255)"/><stop offset="0.5" stop-color="rgb(246,199,255)"/><stop offset="0.75" stop-color="rgb(255,184,231)"/><stop offset="1.0" stop-color="rgb(255,148,191)"/></linearGradient><linearGradient id="cie77" x1="0" y1="0" x2="1" y2="0"><stop offset="0.0" stop-color="rgb(170,202,255)"/><stop offset="0.25" stop-color="rgb(210,202,255)"/><stop offset="0.5" stop-color="rgb(245,197,255)"/><stop offset="0.75" stop-color="rgb(255,182,230)"/><stop offset="1.0" stop-color="rgb(255,147,191)"/></linearGradient><linearGradient id="cie78" x1="0" y1="0" x2="1" y2="0"><stop offset="0.0" stop-color="rgb(170,200,255)"/><stop offset="0.25" stop-color="rgb(210,200,255)"/><stop offset="0.5" stop-color="rgb(245,195,255)"/><stop offset="0.75" stop-color="rgb(255,180,230)"/><stop offset="1.0" stop-color="rgb(255,145,190)"/></linearGradient><linearGradient id="cie79" x1="0" y1="0" x2="1" y2="0"><stop offset="0.0" stop-color="rgb(170,200,255)"/><stop offset="0.25" stop-color="rgb(210,200,255)"/><stop offset="0.5" stop-color="rgb(245,195,255)"/><stop offset="0.75" stop-color="rgb(255,180,230)"/><stop offset="1.0" stop-color="rgb(255,145,190)"/></linearGradient><linearGradient id="thead" x1="0" y1="0" x2="0" y2="1"><stop offset="0" stop-color="#303030"/><stop offset="0.5" stop-color="#2c2c2c"/><stop offset="0.52" stop-color="#161616"/><stop offset="1" stop-color="#0f0f0f"/></linearGradient><linearGradient id="bbar" x1="0" y1="0" x2="0" y2="1"><stop offset="0" stop-color="#474747"/><stop offset="1" stop-color="#2b2b2b"/></linearGradient><linearGradient id="btn" x1="0" y1="0" x2="0" y2="1"><stop offset="0" stop-color="#a8a8a8"/><stop offset="0.35" stop-color="#8a8a8a"/><stop offset="0.6" stop-color="#6c6c6c"/><stop offset="1" stop-color="#575757"/></linearGradient><linearGradient id="btnsel" x1="0" y1="0" x2="0" y2="1"><stop offset="0" stop-color="#1e1e1e"/><stop offset="1" stop-color="#2a2a2a"/></linearGradient><linearGradient id="nbtn" x1="0" y1="0" x2="0" y2="1"><stop offset="0" stop-color="#b4b4b4"/><stop offset="1" stop-color="#8a8a8a"/></linearGradient><linearGradient id="sbtn" x1="0" y1="0" x2="0" y2="1"><stop offset="0" stop-color="#9a9a9a"/><stop offset="1" stop-color="#7a7a7a"/></linearGradient><linearGradient id="nc" x1="0" y1="0" x2="0" y2="1"><stop offset="0" stop-color="#7a7a7a"/><stop offset="1" stop-color="#b8b8b8"/></linearGradient></defs><rect x="0.00" y="0.00" width="2560.00" height="1552.00" fill="#323232" />
<rect x="0.00" y="0.00" width="2560.00" height="23.00" fill="#00c86c" />
<g transform="translate(10,11)"><path d="M0,-8 L4,-4 L0,0 L-4,-4 Z" fill="#f5c400"/><path d="M4,-4 L8,0 L4,4 L0,0 Z" fill="#22cc22"/><path d="M-4,-4 L0,0 L-4,4 L-8,0 Z" fill="#33bbff"/><path d="M0,0 L4,4 L0,8 L-4,4 Z" fill="#ee3366"/></g>
<text x="24.40" y="15.80" font-size="12.50" fill="#000" textLength="458.70" lengthAdjust="spacingAndGlyphs" >Calman 2025 Calman Ultimate for Business 288 Days Remaining  - Analysis/SDR Toolkit</text>
<line x1="2439.00" y1="10.50" x2="2450.00" y2="10.50" stroke="#111" stroke-width="1.2" />
<rect x="2483.5" y="7.5" width="8" height="8" fill="none" stroke="#111" stroke-width="1.2"/>
<path d="M2486,5.5 H2494 V13" fill="none" stroke="#111" stroke-width="1.2"/>
<path d="M2530,5.5 L2540,15.5 M2540,5.5 L2530,15.5" stroke="#111" stroke-width="1.3"/>
<rect x="0.00" y="23.00" width="2560.00" height="65.00" fill="#222222" />
<path d="M1,23 H182 V49 Q182,52.5 178.5,52.5 H4.5 Q1,52.5 1,49 Z" fill="url(#redbtn)"/>
<path d="M182,23 V49 Q182,52.5 178.5,52.5 H4.5 Q1,52.5 1,49 V23" fill="none" stroke="#6a6a6a" stroke-width="0.9"/>
<g transform="translate(34.36,37.35) rotate(45)"><path d="M-1.95,-8.15 L-8.15,-8.15 L-8.15,-1.95" fill="none" stroke="#fff" stroke-width="2.7" stroke-linejoin="round" transform="translate(1.35,1.35)"/><path d="M-1.95,8.15 L-8.15,8.15 L-8.15,1.95" fill="none" stroke="#fff" stroke-width="2.7" stroke-linejoin="round" transform="translate(1.35,-1.35)"/><path d="M1.95,-8.15 L8.15,-8.15 L8.15,-1.95" fill="none" stroke="#fff" stroke-width="2.7" stroke-linejoin="round" transform="translate(-1.35,1.35)"/><path d="M1.95,8.15 L8.15,8.15 L8.15,1.95" fill="none" stroke="#fff" stroke-width="2.7" stroke-linejoin="round" transform="translate(-1.35,-1.35)"/><rect x="-4.75" y="-4.75" width="4.3" height="4.3" rx="0.6" fill="#fff"/><rect x="-4.75" y="0.45" width="4.3" height="4.3" rx="0.6" fill="#fff"/><rect x="0.45" y="-4.75" width="4.3" height="4.3" rx="0.6" fill="#fff"/><rect x="0.45" y="0.45" width="4.3" height="4.3" rx="0.6" fill="#fff"/></g>
<g fill="none" stroke="#fff" stroke-width="3"><path d="M60.55,33.6 A5.3,5.3 0 1 0 60.55,41.1"/><circle cx="67.3" cy="37.35" r="5.3"/><path d="M73.9,30.55 V44.1"/><path d="M79.4,25.3 V44.1"/><path d="M84.4,44.1 V30.55 M84.4,36.6 A4.55,4.55 0 0 1 93.5,36.6 V44.1 M93.5,36.6 A4.55,4.55 0 0 1 102.6,36.6 V44.1"/><circle cx="110.6" cy="37.35" r="5.3"/><path d="M117.4,30.55 V44.1"/><path d="M123.4,44.1 V30.55 M123.4,37 A4.9,4.9 0 0 1 133.2,37 V44.1"/></g>
<ellipse cx="166" cy="37" rx="9.5" ry="10" fill="url(#redcirc)"/>
<path d="M161,35 H171 L166,40 Z" fill="#fff"/>
<rect x="190.00" y="35.50" width="2370.00" height="5.00" fill="url(#rainbow)" />
<path d="M0,58 H195.5 Q199.5,58 199.5,62 V1552 H0 Z" fill="#555555"/>
<circle cx="18.5" cy="72.5" r="10" fill="url(#sbcirc)"/>
<circle cx="18.5" cy="71.5" r="3.8" fill="url(#sbdot)"/>
<circle cx="180.5" cy="72.5" r="10" fill="url(#sbcirc)"/>
<path d="M177.5,71.5 L182,67.5 V76 Z" fill="#f2f2f2"/>
<text x="9.00" y="100.50" font-size="12.50" fill="#e8e8e8" textLength="64.00" lengthAdjust="spacingAndGlyphs" >SDR Toolkit</text>
<rect x="9.00" y="105.50" width="182.00" height="265.00" fill="#202020" />
<rect x="9.00" y="105.50" width="6.00" height="265.00" fill="url(#treeL)" />
<rect x="9.00" y="105.50" width="182.00" height="3.00" fill="url(#treeT)" />
<path d="M20,121.5 L23,118.5 V121.5 Z" fill="#555"/>
<text x="30.00" y="124.00" font-size="11.50" fill="#f4f4f4" font-weight="bold" textLength="47.50" lengthAdjust="spacingAndGlyphs" >Welcome</text>
<text x="43.00" y="140.00" font-size="11.50" fill="#f4f4f4" textLength="45.50" lengthAdjust="spacingAndGlyphs" >Welcome</text>
<text x="43.00" y="154.00" font-size="11.50" fill="#f4f4f4" textLength="38.50" lengthAdjust="spacingAndGlyphs" >Options</text>
<path d="M20,166.3 L23,163.3 V166.3 Z" fill="#555"/>
<text x="30.00" y="168.80" font-size="11.50" fill="#f4f4f4" font-weight="bold" textLength="41.00" lengthAdjust="spacingAndGlyphs" >Analysis</text>
<text x="43.00" y="184.40" font-size="11.50" fill="#f4f4f4" textLength="75.50" lengthAdjust="spacingAndGlyphs" >Dynamic Range</text>
<text x="43.00" y="198.70" font-size="11.50" fill="#f4f4f4" textLength="72.00" lengthAdjust="spacingAndGlyphs" >Grayscale - 2pt</text>
<rect x="40.80" y="203.00" width="86.00" height="14.00" fill="#e6e6e6" />
<text x="43.00" y="213.50" font-size="11.50" fill="#3a3a3a" textLength="81.50" lengthAdjust="spacingAndGlyphs" >Grayscale - Multi</text>
<text x="43.00" y="228.60" font-size="11.50" fill="#f4f4f4" textLength="62.00" lengthAdjust="spacingAndGlyphs" >Color Gamut</text>
<text x="43.00" y="242.90" font-size="11.50" fill="#f4f4f4" textLength="34.50" lengthAdjust="spacingAndGlyphs" >3D LUT</text>
<text x="43.00" y="257.70" font-size="11.50" fill="#f4f4f4" textLength="64.50" lengthAdjust="spacingAndGlyphs" >ColorChecker</text>
<text x="43.00" y="272.70" font-size="11.50" fill="#f4f4f4" textLength="90.00" lengthAdjust="spacingAndGlyphs" >Saturation Sweeps</text>
<text x="43.00" y="287.00" font-size="11.50" fill="#f4f4f4" textLength="92.00" lengthAdjust="spacingAndGlyphs" >Luminance Sweeps</text>
<text x="43.00" y="301.80" font-size="11.50" fill="#f4f4f4" textLength="46.50" lengthAdjust="spacingAndGlyphs" >Additivity</text>
<text x="43.00" y="316.90" font-size="11.50" fill="#f4f4f4" textLength="88.00" lengthAdjust="spacingAndGlyphs" >Screen Uniformity</text>
<text x="43.00" y="330.60" font-size="11.50" fill="#f4f4f4" textLength="85.50" lengthAdjust="spacingAndGlyphs" >Screen Angularity</text>
<text x="43.00" y="345.50" font-size="11.50" fill="#f4f4f4" textLength="75.00" lengthAdjust="spacingAndGlyphs" >Screen Stability</text>
<text x="43.00" y="360.50" font-size="11.50" fill="#f4f4f4" textLength="97.00" lengthAdjust="spacingAndGlyphs" >Spectral Power Dist.</text>
<path d="M201,88 V62 Q201,58.5 204.5,58.5 H288.5 Q292,58.5 292,62 V88 Z" fill="url(#tab)"/>
<path d="M201,88 V62 Q201,58.5 204.5,58.5 H288.5 Q292,58.5 292,62" fill="none" stroke="#8a8a8a" stroke-width="1.1"/>
<line x1="258.00" y1="59.00" x2="258.00" y2="88.00" stroke="#555" stroke-width="1" />
<text x="206.00" y="78.20" font-size="12.00" fill="#e0e0e0" textLength="47.00" lengthAdjust="spacingAndGlyphs" >History 1</text>
<circle cx="274" cy="75" r="9" fill="#383838" stroke="#3e3e3e"/>
<path d="M270.5,75.5 H277.5 M274,72 V79" stroke="#777" stroke-width="1"/>
<rect x="200.00" y="88.00" width="2360.00" height="1464.00" fill="#323232" />
<rect x="200.00" y="87.50" width="2360.00" height="1.50" fill="#262626" />
<rect x="199.50" y="88.00" width="1.00" height="1464.00" fill="#2c2c2c" />
<rect x="2554.00" y="88.00" width="6.00" height="1464.00" fill="url(#redge)" />
<path d="M2068,88 V61 Q2068,58 2071,58 H2208 Q2211,58 2211,61 V88 Z" fill="url(#panel)"/>
<line x1="2071.00" y1="58.60" x2="2208.00" y2="58.60" stroke="#7a7a7a" stroke-width="1" />
<rect x="2068.50" y="58.50" width="4.50" height="29.50" fill="#00dd00" />
<text x="2076.60" y="70.20" font-size="11.00" fill="#eee" textLength="66.00" lengthAdjust="spacingAndGlyphs" >X-Rite i1Pro 2</text>
<text x="2076.60" y="83.40" font-size="11.00" fill="#eee" textLength="55.50" lengthAdjust="spacingAndGlyphs" >Direct View</text>
<circle cx="2155.5" cy="73.5" r="9.5" fill="url(#ddc)"/>
<path d="M2150.0,71 H2161.0 L2155.5,76.5 Z" fill="#fff"/>
<line x1="2175.00" y1="61.00" x2="2175.00" y2="88.00" stroke="#424242" stroke-width="1.3" />
<circle cx="2195.5" cy="73" r="12.3" fill="#0000ee" stroke="#ddd" stroke-width="0.8"/>
<text x="2195.50" y="77.00" font-size="10.00" fill="#fff" text-anchor="middle" textLength="16.00" lengthAdjust="spacingAndGlyphs" >238</text>
<path d="M2217.3,88 V61 Q2217.3,58 2220.3,58 H2343.5 Q2346.5,58 2346.5,61 V88 Z" fill="url(#panel)"/>
<rect x="2217.50" y="58.50" width="4.50" height="29.50" fill="#e8e000" />
<text x="2225.40" y="70.20" font-size="11.00" fill="#eee" textLength="33.00" lengthAdjust="spacingAndGlyphs" >Source</text>
<circle cx="2331" cy="73.5" r="9.5" fill="url(#ddc)"/>
<path d="M2325.5,71 H2336.5 L2331,76.5 Z" fill="#fff"/>
<path d="M2353.2,88 V61 Q2353.2,58 2356.2,58 H2493 Q2496,58 2496,61 V88 Z" fill="url(#panel)"/>
<rect x="2353.50" y="58.50" width="4.50" height="29.50" fill="#e8e000" />
<text x="2361.70" y="70.20" font-size="11.00" fill="#eee" textLength="104.50" lengthAdjust="spacingAndGlyphs" >Direct Display Control</text>
<circle cx="2480" cy="73.5" r="9.5" fill="url(#ddc)"/>
<path d="M2474.5,71 H2485.5 L2480,76.5 Z" fill="#fff"/>
<rect x="2499.5" y="58.5" width="33" height="27.5" rx="3.5" fill="url(#gbtn)" stroke="#d8d8d8" stroke-width="1"/>
<circle cx="2516" cy="71.9" r="9.5" fill="url(#gcirc)"/>
<g transform="translate(2516,71.9)" fill="#e4e4e4"><circle r="4.9"/><rect x="-1.1" y="-6.6" width="2.2" height="3" rx="0.4" transform="rotate(0)"/><rect x="-1.1" y="-6.6" width="2.2" height="3" rx="0.4" transform="rotate(45)"/><rect x="-1.1" y="-6.6" width="2.2" height="3" rx="0.4" transform="rotate(90)"/><rect x="-1.1" y="-6.6" width="2.2" height="3" rx="0.4" transform="rotate(135)"/><rect x="-1.1" y="-6.6" width="2.2" height="3" rx="0.4" transform="rotate(180)"/><rect x="-1.1" y="-6.6" width="2.2" height="3" rx="0.4" transform="rotate(225)"/><rect x="-1.1" y="-6.6" width="2.2" height="3" rx="0.4" transform="rotate(270)"/><rect x="-1.1" y="-6.6" width="2.2" height="3" rx="0.4" transform="rotate(315)"/></g>
<circle cx="2516" cy="71.9" r="2.8" fill="#7a7a7a"/>
<rect x="2534" y="58.5" width="30" height="27.5" rx="3.5" fill="url(#gbtn)" stroke="#d8d8d8" stroke-width="1"/>
<circle cx="2546.8" cy="71.9" r="9.5" fill="url(#gcirc)"/>
<path d="M2544,71.6 L2549.4,66.8 V76.1 Z" fill="#f4f4f4"/>
<text x="212.50" y="282.60" font-size="62.00" fill="#eeeeee" textLength="424.50" lengthAdjust="spacingAndGlyphs" >Grayscale - Multi</text>
<text x="356.00" y="348.60" font-size="31.00" fill="#eeeeee" textLength="151.00" lengthAdjust="spacingAndGlyphs" >dE Formula:</text>
<rect x="520" y="319" width="209" height="36" fill="url(#dd)" stroke="#262626" stroke-width="1.5"/>
<text x="526.60" y="348.60" font-size="21.50" fill="#f0f0f0" textLength="49.00" lengthAdjust="spacingAndGlyphs" >2000</text>
<path d="M708.5,333.8 H721.5 L715,341.8 Z" fill="#000"/>
<rect x="272.00" y="401.00" width="430.00" height="325.00" fill="#222222" />
<line x1="329.10" y1="401.00" x2="329.10" y2="726.00" stroke="#8e8e8e" stroke-width="2.2" />
<line x1="386.20" y1="401.00" x2="386.20" y2="726.00" stroke="#8e8e8e" stroke-width="2.2" />
<line x1="443.30" y1="401.00" x2="443.30" y2="726.00" stroke="#8e8e8e" stroke-width="2.2" />
<line x1="500.40" y1="401.00" x2="500.40" y2="726.00" stroke="#8e8e8e" stroke-width="2.2" />
<line x1="557.50" y1="401.00" x2="557.50" y2="726.00" stroke="#8e8e8e" stroke-width="2.2" />
<line x1="614.60" y1="401.00" x2="614.60" y2="726.00" stroke="#8e8e8e" stroke-width="2.2" />
<line x1="671.70" y1="401.00" x2="671.70" y2="726.00" stroke="#8e8e8e" stroke-width="2.2" />
<rect x="272.00" y="401.00" width="430.00" height="325.00" fill="none" stroke="#8e8e8e" stroke-width="2.2"/>
<text x="466.20" y="394.00" font-size="21.50" fill="#d4d4d4" text-anchor="middle" textLength="111.50" lengthAdjust="spacingAndGlyphs" >DeltaE 2000</text>
<line x1="263.00" y1="726.00" x2="270.50" y2="726.00" stroke="#dedede" stroke-width="2" />
<line x1="263.00" y1="696.45" x2="270.50" y2="696.45" stroke="#dedede" stroke-width="2" />
<line x1="263.00" y1="666.91" x2="270.50" y2="666.91" stroke="#dedede" stroke-width="2" />
<line x1="263.00" y1="637.36" x2="270.50" y2="637.36" stroke="#dedede" stroke-width="2" />
<line x1="263.00" y1="607.82" x2="270.50" y2="607.82" stroke="#dedede" stroke-width="2" />
<line x1="263.00" y1="578.27" x2="270.50" y2="578.27" stroke="#dedede" stroke-width="2" />
<line x1="263.00" y1="548.73" x2="270.50" y2="548.73" stroke="#dedede" stroke-width="2" />
<line x1="263.00" y1="519.18" x2="270.50" y2="519.18" stroke="#dedede" stroke-width="2" />
<line x1="263.00" y1="489.64" x2="270.50" y2="489.64" stroke="#dedede" stroke-width="2" />
<line x1="263.00" y1="460.09" x2="270.50" y2="460.09" stroke="#dedede" stroke-width="2" />
<line x1="263.00" y1="430.55" x2="270.50" y2="430.55" stroke="#dedede" stroke-width="2" />
<line x1="263.00" y1="401.00" x2="270.50" y2="401.00" stroke="#dedede" stroke-width="2" />
<text x="262.60" y="718.30" font-size="20.00" fill="#d4d4d4" text-anchor="end" >0</text>
<text x="262.60" y="688.75" font-size="20.00" fill="#d4d4d4" text-anchor="end" >10</text>
<text x="262.60" y="659.21" font-size="20.00" fill="#d4d4d4" text-anchor="end" >20</text>
<text x="262.60" y="629.66" font-size="20.00" fill="#d4d4d4" text-anchor="end" >30</text>
<text x="262.60" y="600.12" font-size="20.00" fill="#d4d4d4" text-anchor="end" >40</text>
<text x="262.60" y="570.57" font-size="20.00" fill="#d4d4d4" text-anchor="end" >50</text>
<text x="262.60" y="541.03" font-size="20.00" fill="#d4d4d4" text-anchor="end" >60</text>
<text x="262.60" y="511.48" font-size="20.00" fill="#d4d4d4" text-anchor="end" >70</text>
<text x="262.60" y="481.94" font-size="20.00" fill="#d4d4d4" text-anchor="end" >80</text>
<text x="262.60" y="452.39" font-size="20.00" fill="#d4d4d4" text-anchor="end" >90</text>
<text x="262.60" y="422.85" font-size="20.00" fill="#d4d4d4" text-anchor="end" >100</text>
<line x1="272.00" y1="726.00" x2="272.00" y2="733.00" stroke="#dedede" stroke-width="2" />
<text x="272.00" y="756.00" font-size="20.00" fill="#d4d4d4" text-anchor="middle" >0</text>
<line x1="329.10" y1="726.00" x2="329.10" y2="733.00" stroke="#dedede" stroke-width="2" />
<text x="329.10" y="756.00" font-size="20.00" fill="#d4d4d4" text-anchor="middle" >2</text>
<line x1="386.20" y1="726.00" x2="386.20" y2="733.00" stroke="#dedede" stroke-width="2" />
<text x="386.20" y="756.00" font-size="20.00" fill="#d4d4d4" text-anchor="middle" >4</text>
<line x1="443.30" y1="726.00" x2="443.30" y2="733.00" stroke="#dedede" stroke-width="2" />
<text x="443.30" y="756.00" font-size="20.00" fill="#d4d4d4" text-anchor="middle" >6</text>
<line x1="500.40" y1="726.00" x2="500.40" y2="733.00" stroke="#dedede" stroke-width="2" />
<text x="500.40" y="756.00" font-size="20.00" fill="#d4d4d4" text-anchor="middle" >8</text>
<line x1="557.50" y1="726.00" x2="557.50" y2="733.00" stroke="#dedede" stroke-width="2" />
<text x="557.50" y="756.00" font-size="20.00" fill="#d4d4d4" text-anchor="middle" >10</text>
<line x1="614.60" y1="726.00" x2="614.60" y2="733.00" stroke="#dedede" stroke-width="2" />
<text x="614.60" y="756.00" font-size="20.00" fill="#d4d4d4" text-anchor="middle" >12</text>
<line x1="671.70" y1="726.00" x2="671.70" y2="733.00" stroke="#dedede" stroke-width="2" />
<text x="671.70" y="756.00" font-size="20.00" fill="#d4d4d4" text-anchor="middle" >14</text>
<rect x="272.00" y="700.53" width="0.30" height="18.80" fill="url(#bar0)"/>
<rect x="273.00" y="698.53" width="2" height="22.80" fill="#000"/>
<rect x="272.00" y="670.98" width="11.15" height="18.80" fill="url(#bar1)"/>
<path d="M272.00,669.98 H284.15 V690.78 H272.00" fill="none" stroke="#000" stroke-width="2.1"/>
<rect x="273.00" y="670.98" width="10.15" height="1" fill="rgba(255,255,255,0.18)"/>
<rect x="272.00" y="641.44" width="21.52" height="18.80" fill="url(#bar2)"/>
<path d="M272.00,640.44 H294.52 V661.24 H272.00" fill="none" stroke="#000" stroke-width="2.1"/>
<rect x="273.00" y="641.44" width="20.52" height="1" fill="rgba(255,255,255,0.18)"/>
<rect x="272.00" y="611.89" width="19.44" height="18.80" fill="url(#bar3)"/>
<path d="M272.00,610.89 H292.44 V631.69 H272.00" fill="none" stroke="#000" stroke-width="2.1"/>
<rect x="273.00" y="611.89" width="18.44" height="1" fill="rgba(255,255,255,0.18)"/>
<rect x="272.00" y="582.35" width="16.40" height="18.80" fill="url(#bar4)"/>
<path d="M272.00,581.35 H289.40 V602.15 H272.00" fill="none" stroke="#000" stroke-width="2.1"/>
<rect x="273.00" y="582.35" width="15.40" height="1" fill="rgba(255,255,255,0.18)"/>
<rect x="272.00" y="552.80" width="31.63" height="18.80" fill="url(#bar5)"/>
<path d="M272.00,551.80 H304.63 V572.60 H272.00" fill="none" stroke="#000" stroke-width="2.1"/>
<rect x="273.00" y="552.80" width="30.63" height="1" fill="rgba(255,255,255,0.18)"/>
<rect x="272.00" y="523.25" width="23.31" height="18.80" fill="url(#bar6)"/>
<path d="M272.00,522.25 H296.31 V543.05 H272.00" fill="none" stroke="#000" stroke-width="2.1"/>
<rect x="273.00" y="523.25" width="22.31" height="1" fill="rgba(255,255,255,0.18)"/>
<rect x="272.00" y="493.71" width="16.33" height="18.80" fill="url(#bar7)"/>
<path d="M272.00,492.71 H289.33 V513.51 H272.00" fill="none" stroke="#000" stroke-width="2.1"/>
<rect x="273.00" y="493.71" width="15.33" height="1" fill="rgba(255,255,255,0.18)"/>
<rect x="272.00" y="464.16" width="32.56" height="18.80" fill="url(#bar8)"/>
<path d="M272.00,463.16 H305.56 V483.96 H272.00" fill="none" stroke="#000" stroke-width="2.1"/>
<rect x="273.00" y="464.16" width="31.56" height="1" fill="rgba(255,255,255,0.18)"/>
<rect x="272.00" y="434.62" width="15.60" height="18.80" fill="url(#bar9)"/>
<path d="M272.00,433.62 H288.60 V454.42 H272.00" fill="none" stroke="#000" stroke-width="2.1"/>
<rect x="273.00" y="434.62" width="14.60" height="1" fill="rgba(255,255,255,0.18)"/>
<rect x="272.00" y="405.07" width="21.33" height="18.80" fill="url(#bar10)"/>
<path d="M272.00,404.07 H294.33 V424.87 H272.00" fill="none" stroke="#000" stroke-width="2.1"/>
<rect x="273.00" y="405.07" width="20.33" height="1" fill="rgba(255,255,255,0.18)"/>
<line x1="272.00" y1="401.00" x2="272.00" y2="726.00" stroke="#8e8e8e" stroke-width="2.2" />
<rect x="801.00" y="276.00" width="805.40" height="450.00" fill="#222222" />
<line x1="801.00" y1="682.30" x2="1606.40" y2="682.30" stroke="#8e8e8e" stroke-width="2.2" />
<line x1="793.00" y1="682.30" x2="801.00" y2="682.30" stroke="#dedede" stroke-width="2" />
<text x="791.00" y="689.60" font-size="20.00" fill="#d4d4d4" text-anchor="end" >96</text>
<line x1="801.00" y1="592.30" x2="1606.40" y2="592.30" stroke="#8e8e8e" stroke-width="2.2" />
<line x1="793.00" y1="592.30" x2="801.00" y2="592.30" stroke="#dedede" stroke-width="2" />
<text x="791.00" y="599.60" font-size="20.00" fill="#d4d4d4" text-anchor="end" >98</text>
<line x1="801.00" y1="502.30" x2="1606.40" y2="502.30" stroke="#8e8e8e" stroke-width="2.2" />
<line x1="793.00" y1="502.30" x2="801.00" y2="502.30" stroke="#dedede" stroke-width="2" />
<text x="791.00" y="509.60" font-size="20.00" fill="#d4d4d4" text-anchor="end" >100</text>
<line x1="801.00" y1="412.30" x2="1606.40" y2="412.30" stroke="#8e8e8e" stroke-width="2.2" />
<line x1="793.00" y1="412.30" x2="801.00" y2="412.30" stroke="#dedede" stroke-width="2" />
<text x="791.00" y="419.60" font-size="20.00" fill="#d4d4d4" text-anchor="end" >102</text>
<line x1="801.00" y1="322.30" x2="1606.40" y2="322.30" stroke="#8e8e8e" stroke-width="2.2" />
<line x1="793.00" y1="322.30" x2="801.00" y2="322.30" stroke="#dedede" stroke-width="2" />
<text x="791.00" y="329.60" font-size="20.00" fill="#d4d4d4" text-anchor="end" >104</text>
<rect x="801.00" y="276.00" width="805.40" height="450.00" fill="none" stroke="#8e8e8e" stroke-width="2.2"/>
<text x="1182.60" y="269.20" font-size="21.50" fill="#d4d4d4" text-anchor="middle" textLength="117.00" lengthAdjust="spacingAndGlyphs" >RGB Balance</text>
<line x1="801.00" y1="726.00" x2="801.00" y2="733.00" stroke="#dedede" stroke-width="2" />
<text x="801.00" y="755.50" font-size="20.00" fill="#d4d4d4" text-anchor="middle" >0</text>
<line x1="881.54" y1="726.00" x2="881.54" y2="733.00" stroke="#dedede" stroke-width="2" />
<text x="881.54" y="755.50" font-size="20.00" fill="#d4d4d4" text-anchor="middle" >10</text>
<line x1="962.08" y1="726.00" x2="962.08" y2="733.00" stroke="#dedede" stroke-width="2" />
<text x="962.08" y="755.50" font-size="20.00" fill="#d4d4d4" text-anchor="middle" >20</text>
<line x1="1042.62" y1="726.00" x2="1042.62" y2="733.00" stroke="#dedede" stroke-width="2" />
<text x="1042.62" y="755.50" font-size="20.00" fill="#d4d4d4" text-anchor="middle" >30</text>
<line x1="1123.16" y1="726.00" x2="1123.16" y2="733.00" stroke="#dedede" stroke-width="2" />
<text x="1123.16" y="755.50" font-size="20.00" fill="#d4d4d4" text-anchor="middle" >40</text>
<line x1="1203.70" y1="726.00" x2="1203.70" y2="733.00" stroke="#dedede" stroke-width="2" />
<text x="1203.70" y="755.50" font-size="20.00" fill="#d4d4d4" text-anchor="middle" >50</text>
<line x1="1284.24" y1="726.00" x2="1284.24" y2="733.00" stroke="#dedede" stroke-width="2" />
<text x="1284.24" y="755.50" font-size="20.00" fill="#d4d4d4" text-anchor="middle" >60</text>
<line x1="1364.78" y1="726.00" x2="1364.78" y2="733.00" stroke="#dedede" stroke-width="2" />
<text x="1364.78" y="755.50" font-size="20.00" fill="#d4d4d4" text-anchor="middle" >70</text>
<line x1="1445.32" y1="726.00" x2="1445.32" y2="733.00" stroke="#dedede" stroke-width="2" />
<text x="1445.32" y="755.50" font-size="20.00" fill="#d4d4d4" text-anchor="middle" >80</text>
<line x1="1525.86" y1="726.00" x2="1525.86" y2="733.00" stroke="#dedede" stroke-width="2" />
<text x="1525.86" y="755.50" font-size="20.00" fill="#d4d4d4" text-anchor="middle" >90</text>
<line x1="1606.40" y1="726.00" x2="1606.40" y2="733.00" stroke="#dedede" stroke-width="2" />
<text x="1606.40" y="755.50" font-size="20.00" fill="#d4d4d4" text-anchor="middle" >100</text>
<polyline points="801.00,502.30 881.54,520.30 962.08,515.35 1042.62,517.15 1123.16,510.85 1203.70,541.90 1284.24,544.60 1364.78,534.70 1445.32,526.60 1525.86,520.30 1606.40,515.35" fill="none" stroke="#ff0000" stroke-width="4.2" stroke-linejoin="miter" clip-path="url(#cliprgb)"/>
<polyline points="801.00,499.60 881.54,506.35 962.08,490.60 1042.62,502.30 1123.16,502.30 1203.70,511.75 1284.24,532.00 1364.78,532.00 1445.32,536.50 1525.86,521.65 1606.40,497.80" fill="none" stroke="#008000" stroke-width="4.2" stroke-linejoin="miter" clip-path="url(#cliprgb)"/>
<polyline points="801.00,497.80 881.54,503.20 962.08,494.20 1042.62,516.25 1123.16,517.15 1203.70,521.65 1284.24,514.90 1364.78,520.30 1445.32,508.15 1525.86,505.45 1606.40,476.20" fill="none" stroke="#0000ff" stroke-width="4.2" stroke-linejoin="miter" clip-path="url(#cliprgb)"/>
<rect x="1696.00" y="275.50" width="181.00" height="457.50" fill="#222222" />
<line x1="1696.00" y1="690.20" x2="1877.00" y2="690.20" stroke="#8e8e8e" stroke-width="2.2" />
<line x1="1688.00" y1="690.20" x2="1696.00" y2="690.20" stroke="#dedede" stroke-width="2" />
<text x="1687.00" y="697.50" font-size="20.00" fill="#d4d4d4" text-anchor="end" >96</text>
<line x1="1696.00" y1="598.60" x2="1877.00" y2="598.60" stroke="#8e8e8e" stroke-width="2.2" />
<line x1="1688.00" y1="598.60" x2="1696.00" y2="598.60" stroke="#dedede" stroke-width="2" />
<text x="1687.00" y="605.90" font-size="20.00" fill="#d4d4d4" text-anchor="end" >98</text>
<line x1="1696.00" y1="507.00" x2="1877.00" y2="507.00" stroke="#8e8e8e" stroke-width="2.2" />
<line x1="1688.00" y1="507.00" x2="1696.00" y2="507.00" stroke="#dedede" stroke-width="2" />
<text x="1687.00" y="514.30" font-size="20.00" fill="#d4d4d4" text-anchor="end" >100</text>
<line x1="1696.00" y1="415.40" x2="1877.00" y2="415.40" stroke="#8e8e8e" stroke-width="2.2" />
<line x1="1688.00" y1="415.40" x2="1696.00" y2="415.40" stroke="#dedede" stroke-width="2" />
<text x="1687.00" y="422.70" font-size="20.00" fill="#d4d4d4" text-anchor="end" >102</text>
<line x1="1696.00" y1="323.80" x2="1877.00" y2="323.80" stroke="#8e8e8e" stroke-width="2.2" />
<line x1="1688.00" y1="323.80" x2="1696.00" y2="323.80" stroke="#dedede" stroke-width="2" />
<text x="1687.00" y="331.10" font-size="20.00" fill="#d4d4d4" text-anchor="end" >104</text>
<rect x="1696.00" y="275.50" width="181.00" height="457.50" fill="none" stroke="#8e8e8e" stroke-width="2.2"/>
<text x="1765.00" y="268.00" font-size="21.50" fill="#d4d4d4" text-anchor="middle" textLength="117.40" lengthAdjust="spacingAndGlyphs" >RGB Balance</text>
<rect x="1713.30" y="522.11" width="46.70" height="210.89" fill="url(#rb)" stroke="#000" stroke-width="2.4"/>
<rect x="1760.00" y="502.88" width="48.00" height="230.12" fill="url(#gb)" stroke="#000" stroke-width="2.4"/>
<rect x="1808.00" y="481.81" width="48.80" height="251.19" fill="url(#bb)" stroke="#000" stroke-width="2.4"/>
<line x1="1695.00" y1="733.00" x2="1878.00" y2="733.00" stroke="#8e8e8e" stroke-width="2.2" />
<line x1="1696.00" y1="733.00" x2="1696.00" y2="742.00" stroke="#dedede" stroke-width="2" />
<line x1="1877.00" y1="733.00" x2="1877.00" y2="742.00" stroke="#dedede" stroke-width="2" />
<text x="1786.50" y="755.50" font-size="20.00" fill="#d4d4d4" text-anchor="middle" >100</text>
<rect x="1960.00" y="276.50" width="560.70" height="449.10" fill="#222222" />
<line x1="1960.00" y1="726.80" x2="2520.70" y2="726.80" stroke="#8e8e8e" stroke-width="2.2" />
<line x1="1950.00" y1="726.80" x2="1960.00" y2="726.80" stroke="#dedede" stroke-width="2" />
<text x="1950.00" y="734.10" font-size="20.00" fill="#d4d4d4" text-anchor="end" >1.8</text>
<line x1="1960.00" y1="636.88" x2="2520.70" y2="636.88" stroke="#8e8e8e" stroke-width="2.2" />
<line x1="1950.00" y1="636.88" x2="1960.00" y2="636.88" stroke="#dedede" stroke-width="2" />
<text x="1950.00" y="644.18" font-size="20.00" fill="#d4d4d4" text-anchor="end" >2</text>
<line x1="1960.00" y1="546.96" x2="2520.70" y2="546.96" stroke="#8e8e8e" stroke-width="2.2" />
<line x1="1950.00" y1="546.96" x2="1960.00" y2="546.96" stroke="#dedede" stroke-width="2" />
<text x="1950.00" y="554.26" font-size="20.00" fill="#d4d4d4" text-anchor="end" >2.2</text>
<line x1="1960.00" y1="457.04" x2="2520.70" y2="457.04" stroke="#8e8e8e" stroke-width="2.2" />
<line x1="1950.00" y1="457.04" x2="1960.00" y2="457.04" stroke="#dedede" stroke-width="2" />
<text x="1950.00" y="464.34" font-size="20.00" fill="#d4d4d4" text-anchor="end" >2.4</text>
<line x1="1960.00" y1="367.12" x2="2520.70" y2="367.12" stroke="#8e8e8e" stroke-width="2.2" />
<line x1="1950.00" y1="367.12" x2="1960.00" y2="367.12" stroke="#dedede" stroke-width="2" />
<text x="1950.00" y="374.42" font-size="20.00" fill="#d4d4d4" text-anchor="end" >2.6</text>
<line x1="1960.00" y1="277.20" x2="2520.70" y2="277.20" stroke="#8e8e8e" stroke-width="2.2" />
<line x1="1950.00" y1="277.20" x2="1960.00" y2="277.20" stroke="#dedede" stroke-width="2" />
<text x="1950.00" y="284.50" font-size="20.00" fill="#d4d4d4" text-anchor="end" >2.8</text>
<rect x="1960.00" y="276.50" width="560.70" height="449.10" fill="none" stroke="#8e8e8e" stroke-width="2.2"/>
<line x1="1960.00" y1="276.50" x2="2520.70" y2="276.50" stroke="#8e8e8e" stroke-width="3.5" />
<text x="2222.40" y="268.50" font-size="21.50" fill="#d4d4d4" text-anchor="middle" textLength="154.00" lengthAdjust="spacingAndGlyphs" >Gamma Log/Log</text>
<line x1="1960.00" y1="725.60" x2="1960.00" y2="733.00" stroke="#dedede" stroke-width="2" />
<text x="1960.00" y="755.50" font-size="20.00" fill="#d4d4d4" text-anchor="middle" >0</text>
<line x1="2072.14" y1="725.60" x2="2072.14" y2="733.00" stroke="#dedede" stroke-width="2" />
<text x="2072.14" y="755.50" font-size="20.00" fill="#d4d4d4" text-anchor="middle" >20</text>
<line x1="2184.28" y1="725.60" x2="2184.28" y2="733.00" stroke="#dedede" stroke-width="2" />
<text x="2184.28" y="755.50" font-size="20.00" fill="#d4d4d4" text-anchor="middle" >40</text>
<line x1="2296.42" y1="725.60" x2="2296.42" y2="733.00" stroke="#dedede" stroke-width="2" />
<text x="2296.42" y="755.50" font-size="20.00" fill="#d4d4d4" text-anchor="middle" >60</text>
<line x1="2408.56" y1="725.60" x2="2408.56" y2="733.00" stroke="#dedede" stroke-width="2" />
<text x="2408.56" y="755.50" font-size="20.00" fill="#d4d4d4" text-anchor="middle" >80</text>
<line x1="2520.70" y1="725.60" x2="2520.70" y2="733.00" stroke="#dedede" stroke-width="2" />
<text x="2520.70" y="755.50" font-size="20.00" fill="#d4d4d4" text-anchor="middle" >100</text>
<polyline points="1976.82,747.68 1979.27,733.58 1981.71,721.40 1984.15,710.72 1986.60,701.24 1989.04,692.74 1991.49,685.05 1993.93,678.04 1996.37,671.61 1998.82,665.69 2001.26,660.21 2003.71,655.11 2006.15,650.35 2008.59,645.89 2011.04,641.71 2013.48,637.76 2015.93,634.04 2018.37,630.52 2020.81,627.18 2023.26,624.01 2025.70,620.99 2028.15,618.11 2030.59,615.37 2033.03,612.74 2035.48,610.23 2037.92,607.82 2040.37,605.50 2042.81,603.28 2045.26,601.15 2047.70,599.09 2050.14,597.11 2052.59,595.20 2055.03,593.36 2057.48,591.58 2059.92,589.86 2062.36,588.20 2064.81,586.59 2067.25,585.03 2069.70,583.51 2072.14,582.05 2074.94,580.42 2086.37,574.32 2097.80,568.96 2109.23,564.20 2120.66,559.95 2132.09,556.13 2143.52,552.68 2154.95,549.54 2166.38,546.67 2177.81,544.05 2189.24,541.64 2200.67,539.43 2212.10,537.38 2223.53,535.48 2234.96,533.72 2246.39,532.08 2257.82,530.56 2269.25,529.14 2280.68,527.81 2292.11,526.57 2303.54,525.41 2314.97,524.32 2326.40,523.30 2337.83,522.34 2349.26,521.44 2360.68,520.59 2372.11,519.80 2383.54,519.05 2394.97,518.34 2406.40,517.68 2417.83,517.05 2429.26,516.46 2440.69,515.90 2452.12,515.38 2463.55,514.89 2474.98,514.42 2486.41,513.98 2497.84,513.57 2509.27,513.18 2520.70,512.82" fill="none" stroke="#ffff00" stroke-width="3.8" clip-path="url(#clipg)"/>
<polyline points="1960.00,961.58 2016.07,630.68 2072.14,585.58 2128.21,556.94 2184.28,542.82 2240.35,523.90 2296.42,504.11 2352.49,494.04 2408.56,474.98 2464.63,461.18 2520.70,513.28" fill="none" stroke="#808080" stroke-width="4.0" clip-path="url(#clipg)"/>
<text x="322.70" y="815.00" font-size="43.00" fill="#eeeeee" textLength="304.30" lengthAdjust="spacingAndGlyphs" >Avg dE2000: 0.8</text>
<text x="904.00" y="814.60" font-size="43.00" fill="#eeeeee" textLength="268.20" lengthAdjust="spacingAndGlyphs" >Avg CCT: 6570</text>
<text x="1341.50" y="814.60" font-size="43.00" fill="#eeeeee" textLength="577.80" lengthAdjust="spacingAndGlyphs" >Contrast Ratio: 384379716341</text>
<text x="1999.60" y="814.60" font-size="43.00" fill="#eeeeee" textLength="444.80" lengthAdjust="spacingAndGlyphs" >Average Gamma: 2.237</text>
<rect x="200.00" y="843.00" width="2360.00" height="185.00" fill="#000000" />
<line x1="335.50" y1="843.00" x2="335.50" y2="1028.00" stroke="#0c0c0c" stroke-width="1" />
<line x1="2539.70" y1="843.00" x2="2539.70" y2="1028.00" stroke="#0c0c0c" stroke-width="1" />
<rect x="368.20" y="852.4" width="168.5" height="142.2" fill="rgb(0,0,0)" stroke="#f4f4f4" stroke-width="2"/>
<text x="452.45" y="1015.70" font-size="16.00" fill="#ffffff" text-anchor="middle" >0</text>
<rect x="566.90" y="852.4" width="168.5" height="142.2" fill="rgb(26,26,26)" stroke="#f4f4f4" stroke-width="2"/>
<text x="651.15" y="1015.70" font-size="16.00" fill="#ffffff" text-anchor="middle" >10</text>
<rect x="765.60" y="852.4" width="168.5" height="142.2" fill="rgb(51,51,51)" stroke="#f4f4f4" stroke-width="2"/>
<text x="849.85" y="1015.70" font-size="16.00" fill="#ffffff" text-anchor="middle" >20</text>
<rect x="964.30" y="852.4" width="168.5" height="142.2" fill="rgb(76,76,76)" stroke="#f4f4f4" stroke-width="2"/>
<text x="1048.55" y="1015.70" font-size="16.00" fill="#ffffff" text-anchor="middle" >30</text>
<rect x="1163.00" y="852.4" width="168.5" height="142.2" fill="rgb(102,102,102)" stroke="#f4f4f4" stroke-width="2"/>
<text x="1247.25" y="1015.70" font-size="16.00" fill="#ffffff" text-anchor="middle" >40</text>
<rect x="1361.70" y="852.4" width="168.5" height="142.2" fill="rgb(128,128,128)" stroke="#f4f4f4" stroke-width="2"/>
<text x="1445.95" y="1015.70" font-size="16.00" fill="#ffffff" text-anchor="middle" >50</text>
<rect x="1560.40" y="852.4" width="168.5" height="142.2" fill="rgb(153,153,153)" stroke="#f4f4f4" stroke-width="2"/>
<text x="1644.65" y="1015.70" font-size="16.00" fill="#ffffff" text-anchor="middle" >60</text>
<rect x="1759.10" y="852.4" width="168.5" height="142.2" fill="rgb(178,178,178)" stroke="#f4f4f4" stroke-width="2"/>
<text x="1843.35" y="1015.70" font-size="16.00" fill="#ffffff" text-anchor="middle" >70</text>
<rect x="1957.80" y="852.4" width="168.5" height="142.2" fill="rgb(204,204,204)" stroke="#f4f4f4" stroke-width="2"/>
<text x="2042.05" y="1015.70" font-size="16.00" fill="#ffffff" text-anchor="middle" >80</text>
<rect x="2156.50" y="852.4" width="168.5" height="142.2" fill="rgb(230,230,230)" stroke="#f4f4f4" stroke-width="2"/>
<text x="2240.75" y="1015.70" font-size="16.00" fill="#ffffff" text-anchor="middle" >90</text>
<rect x="2355.20" y="852.4" width="168.5" height="142.2" fill="rgb(255,255,255)" stroke="#f4f4f4" stroke-width="2"/>
<text x="2439.45" y="1015.70" font-size="16.00" fill="#ffffff" text-anchor="middle" >100</text>
<text transform="translate(355.8,883.5) rotate(-90)" font-size="17.5" fill="#f0f0f0" text-anchor="middle" textLength="49" lengthAdjust="spacingAndGlyphs">Actual</text>
<text transform="translate(355.8,964) rotate(-90)" font-size="17.5" fill="#f0f0f0" text-anchor="middle" textLength="48" lengthAdjust="spacingAndGlyphs">Target</text>
<text x="230.30" y="1123.30" font-size="42.50" fill="#eeeeee" textLength="308.70" lengthAdjust="spacingAndGlyphs" >Current Reading</text>
<text x="231.00" y="1181.70" font-size="35.00" fill="#eeeeee" textLength="143.60" lengthAdjust="spacingAndGlyphs" >x: 0.3112</text>
<text x="441.80" y="1181.70" font-size="35.00" fill="#eeeeee" textLength="145.40" lengthAdjust="spacingAndGlyphs" >y: 0.3276</text>
<text x="231.00" y="1230.00" font-size="35.00" fill="#eeeeee" textLength="156.00" lengthAdjust="spacingAndGlyphs" >u': 0.1973</text>
<text x="441.80" y="1230.00" font-size="35.00" fill="#eeeeee" textLength="154.50" lengthAdjust="spacingAndGlyphs" >v': 0.4674</text>
<text x="231.00" y="1278.00" font-size="35.00" fill="#eeeeee" textLength="264.00" lengthAdjust="spacingAndGlyphs" >cd/m²: 384.3797</text>
<text x="231.00" y="1326.70" font-size="35.00" fill="#eeeeee" textLength="216.60" lengthAdjust="spacingAndGlyphs" >ΔE 2000: 0.82</text>
<g clip-path="url(#clipcie)">
<rect x="715.70" y="1081.00" width="356.70" height="3.00" fill="url(#cie0)" shape-rendering="crispEdges"/>
<rect x="715.70" y="1084.00" width="356.70" height="3.00" fill="url(#cie1)" shape-rendering="crispEdges"/>
<rect x="715.70" y="1087.00" width="356.70" height="3.00" fill="url(#cie2)" shape-rendering="crispEdges"/>
<rect x="715.70" y="1090.00" width="356.70" height="3.00" fill="url(#cie3)" shape-rendering="crispEdges"/>
<rect x="715.70" y="1093.00" width="356.70" height="3.00" fill="url(#cie4)" shape-rendering="crispEdges"/>
<rect x="715.70" y="1096.00" width="356.70" height="3.00" fill="url(#cie5)" shape-rendering="crispEdges"/>
<rect x="715.70" y="1099.00" width="356.70" height="3.00" fill="url(#cie6)" shape-rendering="crispEdges"/>
<rect x="715.70" y="1102.00" width="356.70" height="3.00" fill="url(#cie7)" shape-rendering="crispEdges"/>
<rect x="715.70" y="1105.00" width="356.70" height="3.00" fill="url(#cie8)" shape-rendering="crispEdges"/>
<rect x="715.70" y="1108.00" width="356.70" height="3.00" fill="url(#cie9)" shape-rendering="crispEdges"/>
<rect x="715.70" y="1111.00" width="356.70" height="3.00" fill="url(#cie10)" shape-rendering="crispEdges"/>
<rect x="715.70" y="1114.00" width="356.70" height="3.00" fill="url(#cie11)" shape-rendering="crispEdges"/>
<rect x="715.70" y="1117.00" width="356.70" height="3.00" fill="url(#cie12)" shape-rendering="crispEdges"/>
<rect x="715.70" y="1120.00" width="356.70" height="3.00" fill="url(#cie13)" shape-rendering="crispEdges"/>
<rect x="715.70" y="1123.00" width="356.70" height="3.00" fill="url(#cie14)" shape-rendering="crispEdges"/>
<rect x="715.70" y="1126.00" width="356.70" height="3.00" fill="url(#cie15)" shape-rendering="crispEdges"/>
<rect x="715.70" y="1129.00" width="356.70" height="3.00" fill="url(#cie16)" shape-rendering="crispEdges"/>
<rect x="715.70" y="1132.00" width="356.70" height="3.00" fill="url(#cie17)" shape-rendering="crispEdges"/>
<rect x="715.70" y="1135.00" width="356.70" height="3.00" fill="url(#cie18)" shape-rendering="crispEdges"/>
<rect x="715.70" y="1138.00" width="356.70" height="3.00" fill="url(#cie19)" shape-rendering="crispEdges"/>
<rect x="715.70" y="1141.00" width="356.70" height="3.00" fill="url(#cie20)" shape-rendering="crispEdges"/>
<rect x="715.70" y="1144.00" width="356.70" height="3.00" fill="url(#cie21)" shape-rendering="crispEdges"/>
<rect x="715.70" y="1147.00" width="356.70" height="3.00" fill="url(#cie22)" shape-rendering="crispEdges"/>
<rect x="715.70" y="1150.00" width="356.70" height="3.00" fill="url(#cie23)" shape-rendering="crispEdges"/>
<rect x="715.70" y="1153.00" width="356.70" height="3.00" fill="url(#cie24)" shape-rendering="crispEdges"/>
<rect x="715.70" y="1156.00" width="356.70" height="3.00" fill="url(#cie25)" shape-rendering="crispEdges"/>
<rect x="715.70" y="1159.00" width="356.70" height="3.00" fill="url(#cie26)" shape-rendering="crispEdges"/>
<rect x="715.70" y="1162.00" width="356.70" height="3.00" fill="url(#cie27)" shape-rendering="crispEdges"/>
<rect x="715.70" y="1165.00" width="356.70" height="3.00" fill="url(#cie28)" shape-rendering="crispEdges"/>
<rect x="715.70" y="1168.00" width="356.70" height="3.00" fill="url(#cie29)" shape-rendering="crispEdges"/>
<rect x="715.70" y="1171.00" width="356.70" height="3.00" fill="url(#cie30)" shape-rendering="crispEdges"/>
<rect x="715.70" y="1174.00" width="356.70" height="3.00" fill="url(#cie31)" shape-rendering="crispEdges"/>
<rect x="715.70" y="1177.00" width="356.70" height="3.00" fill="url(#cie32)" shape-rendering="crispEdges"/>
<rect x="715.70" y="1180.00" width="356.70" height="3.00" fill="url(#cie33)" shape-rendering="crispEdges"/>
<rect x="715.70" y="1183.00" width="356.70" height="3.00" fill="url(#cie34)" shape-rendering="crispEdges"/>
<rect x="715.70" y="1186.00" width="356.70" height="3.00" fill="url(#cie35)" shape-rendering="crispEdges"/>
<rect x="715.70" y="1189.00" width="356.70" height="3.00" fill="url(#cie36)" shape-rendering="crispEdges"/>
<rect x="715.70" y="1192.00" width="356.70" height="3.00" fill="url(#cie37)" shape-rendering="crispEdges"/>
<rect x="715.70" y="1195.00" width="356.70" height="3.00" fill="url(#cie38)" shape-rendering="crispEdges"/>
<rect x="715.70" y="1198.00" width="356.70" height="3.00" fill="url(#cie39)" shape-rendering="crispEdges"/>
<rect x="715.70" y="1201.00" width="356.70" height="3.00" fill="url(#cie40)" shape-rendering="crispEdges"/>
<rect x="715.70" y="1204.00" width="356.70" height="3.00" fill="url(#cie41)" shape-rendering="crispEdges"/>
<rect x="715.70" y="1207.00" width="356.70" height="3.00" fill="url(#cie42)" shape-rendering="crispEdges"/>
<rect x="715.70" y="1210.00" width="356.70" height="3.00" fill="url(#cie43)" shape-rendering="crispEdges"/>
<rect x="715.70" y="1213.00" width="356.70" height="3.00" fill="url(#cie44)" shape-rendering="crispEdges"/>
<rect x="715.70" y="1216.00" width="356.70" height="3.00" fill="url(#cie45)" shape-rendering="crispEdges"/>
<rect x="715.70" y="1219.00" width="356.70" height="3.00" fill="url(#cie46)" shape-rendering="crispEdges"/>
<rect x="715.70" y="1222.00" width="356.70" height="3.00" fill="url(#cie47)" shape-rendering="crispEdges"/>
<rect x="715.70" y="1225.00" width="356.70" height="3.00" fill="url(#cie48)" shape-rendering="crispEdges"/>
<rect x="715.70" y="1228.00" width="356.70" height="3.00" fill="url(#cie49)" shape-rendering="crispEdges"/>
<rect x="715.70" y="1231.00" width="356.70" height="3.00" fill="url(#cie50)" shape-rendering="crispEdges"/>
<rect x="715.70" y="1234.00" width="356.70" height="3.00" fill="url(#cie51)" shape-rendering="crispEdges"/>
<rect x="715.70" y="1237.00" width="356.70" height="3.00" fill="url(#cie52)" shape-rendering="crispEdges"/>
<rect x="715.70" y="1240.00" width="356.70" height="3.00" fill="url(#cie53)" shape-rendering="crispEdges"/>
<rect x="715.70" y="1243.00" width="356.70" height="3.00" fill="url(#cie54)" shape-rendering="crispEdges"/>
<rect x="715.70" y="1246.00" width="356.70" height="3.00" fill="url(#cie55)" shape-rendering="crispEdges"/>
<rect x="715.70" y="1249.00" width="356.70" height="3.00" fill="url(#cie56)" shape-rendering="crispEdges"/>
<rect x="715.70" y="1252.00" width="356.70" height="3.00" fill="url(#cie57)" shape-rendering="crispEdges"/>
<rect x="715.70" y="1255.00" width="356.70" height="3.00" fill="url(#cie58)" shape-rendering="crispEdges"/>
<rect x="715.70" y="1258.00" width="356.70" height="3.00" fill="url(#cie59)" shape-rendering="crispEdges"/>
<rect x="715.70" y="1261.00" width="356.70" height="3.00" fill="url(#cie60)" shape-rendering="crispEdges"/>
<rect x="715.70" y="1264.00" width="356.70" height="3.00" fill="url(#cie61)" shape-rendering="crispEdges"/>
<rect x="715.70" y="1267.00" width="356.70" height="3.00" fill="url(#cie62)" shape-rendering="crispEdges"/>
<rect x="715.70" y="1270.00" width="356.70" height="3.00" fill="url(#cie63)" shape-rendering="crispEdges"/>
<rect x="715.70" y="1273.00" width="356.70" height="3.00" fill="url(#cie64)" shape-rendering="crispEdges"/>
<rect x="715.70" y="1276.00" width="356.70" height="3.00" fill="url(#cie65)" shape-rendering="crispEdges"/>
<rect x="715.70" y="1279.00" width="356.70" height="3.00" fill="url(#cie66)" shape-rendering="crispEdges"/>
<rect x="715.70" y="1282.00" width="356.70" height="3.00" fill="url(#cie67)" shape-rendering="crispEdges"/>
<rect x="715.70" y="1285.00" width="356.70" height="3.00" fill="url(#cie68)" shape-rendering="crispEdges"/>
<rect x="715.70" y="1288.00" width="356.70" height="3.00" fill="url(#cie69)" shape-rendering="crispEdges"/>
<rect x="715.70" y="1291.00" width="356.70" height="3.00" fill="url(#cie70)" shape-rendering="crispEdges"/>
<rect x="715.70" y="1294.00" width="356.70" height="3.00" fill="url(#cie71)" shape-rendering="crispEdges"/>
<rect x="715.70" y="1297.00" width="356.70" height="3.00" fill="url(#cie72)" shape-rendering="crispEdges"/>
<rect x="715.70" y="1300.00" width="356.70" height="3.00" fill="url(#cie73)" shape-rendering="crispEdges"/>
<rect x="715.70" y="1303.00" width="356.70" height="3.00" fill="url(#cie74)" shape-rendering="crispEdges"/>
<rect x="715.70" y="1306.00" width="356.70" height="3.00" fill="url(#cie75)" shape-rendering="crispEdges"/>
<rect x="715.70" y="1309.00" width="356.70" height="3.00" fill="url(#cie76)" shape-rendering="crispEdges"/>
<rect x="715.70" y="1312.00" width="356.70" height="3.00" fill="url(#cie77)" shape-rendering="crispEdges"/>
<rect x="715.70" y="1315.00" width="356.70" height="3.00" fill="url(#cie78)" shape-rendering="crispEdges"/>
<rect x="715.70" y="1318.00" width="356.70" height="3.00" fill="url(#cie79)" shape-rendering="crispEdges"/>
</g>
<polyline points="1376.10,974.78 1355.22,983.42 1334.99,991.98 1315.39,1000.44 1296.39,1008.81 1277.98,1017.07 1260.14,1025.24 1242.84,1033.29 1226.06,1041.23 1209.79,1049.06 1194.01,1056.78 1178.69,1064.38 1163.83,1071.87 1149.41,1079.24 1135.40,1086.49 1121.80,1093.63 1108.59,1100.65 1095.75,1107.55 1083.28,1114.34 1071.16,1121.01 1059.37,1127.57 1047.91,1134.02 1036.76,1140.36 1025.91,1146.58 1015.36,1152.70 1005.09,1158.71 995.08,1164.62 985.34,1170.42 975.85,1176.12 966.61,1181.72 957.60,1187.22 948.83,1192.62 940.27,1197.93 931.92,1203.14 923.78,1208.26 915.84,1213.29 908.09,1218.23 900.53,1223.09 893.15,1227.85 885.95,1232.54 878.91,1237.14 872.04,1241.66 865.33,1246.10 858.77,1250.47 852.36,1254.76 846.09,1258.97 839.96,1263.12 833.98,1267.19 828.12,1271.19 822.39,1275.12 816.78,1278.98 811.29,1282.78 805.93,1286.52 800.67,1290.19 795.53,1293.80 790.49,1297.35 785.55,1300.84 780.72,1304.28 775.99,1307.65 771.35,1310.97 766.80,1314.24 762.35,1317.45 757.98,1320.61 753.70,1323.72 749.50,1326.78 745.38,1329.79 741.35,1332.76 737.38,1335.67 733.50,1338.54 729.68,1341.37 725.94,1344.15 722.27,1346.88 718.66,1349.58 715.12,1352.23 711.64,1354.84 708.23,1357.41 704.88,1359.95 701.58,1362.44 698.35,1364.90 695.17,1367.32 692.05,1369.70 688.98,1372.05 685.96,1374.37 682.99,1376.64 680.08,1378.89 677.21,1381.11 674.39,1383.29 671.62,1385.44 668.89,1387.56 666.21,1389.65 663.57,1391.71 660.98,1393.74 658.42,1395.74 655.91,1397.71 653.43,1399.66 651.00,1401.58 648.60,1403.47 646.24,1405.34 643.92,1407.18 641.63,1408.99 639.38,1410.78 637.16,1412.55 634.98,1414.30 632.83,1416.02 630.71,1417.71 628.62,1419.39 626.56,1421.04 624.53,1422.67 622.54,1424.28 620.57,1425.87 618.63,1427.44 616.71,1428.99 614.83,1430.52 612.97,1432.03 611.13,1433.52 609.33,1434.99 607.54,1436.45 605.79,1437.88 604.05,1439.30 602.34,1440.70" fill="none" stroke="#000" stroke-width="3.6" clip-path="url(#clipcie)"/>
<rect x="884" y="1188" width="19" height="19" fill="#fcfcfc" stroke="#000" stroke-width="1.8"/>
<circle cx="872.11" cy="1202.19" r="5.6" fill="rgb(26,26,26)" stroke="#000" stroke-width="1.3"/>
<circle cx="875.67" cy="1195.14" r="5.6" fill="rgb(51,51,51)" stroke="#000" stroke-width="1.3"/>
<circle cx="892.77" cy="1189.50" r="5.6" fill="rgb(76,76,76)" stroke="#000" stroke-width="1.3"/>
<circle cx="896.33" cy="1190.44" r="5.6" fill="rgb(102,102,102)" stroke="#000" stroke-width="1.3"/>
<circle cx="883.51" cy="1193.73" r="5.6" fill="rgb(128,128,128)" stroke="#000" stroke-width="1.3"/>
<circle cx="881.37" cy="1205.95" r="5.6" fill="rgb(153,153,153)" stroke="#000" stroke-width="1.3"/>
<circle cx="888.50" cy="1203.13" r="5.6" fill="rgb(178,178,178)" stroke="#000" stroke-width="1.3"/>
<circle cx="888.50" cy="1208.30" r="5.6" fill="rgb(204,204,204)" stroke="#000" stroke-width="1.3"/>
<circle cx="889.92" cy="1203.60" r="5.6" fill="rgb(230,230,230)" stroke="#000" stroke-width="1.3"/>
<circle cx="882.80" cy="1205.48" r="5.6" fill="rgb(255,255,255)" stroke="#000" stroke-width="1.3"/>
<rect x="715.70" y="1081.80" width="356.70" height="235.30" fill="none" stroke="#8e8e8e" stroke-width="2.4"/>
<text x="869.50" y="1074.70" font-size="21.00" fill="#d4d4d4" text-anchor="middle" textLength="106.00" lengthAdjust="spacingAndGlyphs" >CIE 1931 xy</text>
<line x1="731.80" y1="1317.10" x2="731.80" y2="1324.10" stroke="#dedede" stroke-width="2" />
<text x="731.80" y="1346.00" font-size="20.00" fill="#d4d4d4" text-anchor="middle" >0.29</text>
<line x1="803.02" y1="1317.10" x2="803.02" y2="1324.10" stroke="#dedede" stroke-width="2" />
<text x="803.02" y="1346.00" font-size="20.00" fill="#d4d4d4" text-anchor="middle" >0.3</text>
<line x1="874.25" y1="1317.10" x2="874.25" y2="1324.10" stroke="#dedede" stroke-width="2" />
<text x="874.25" y="1346.00" font-size="20.00" fill="#d4d4d4" text-anchor="middle" >0.31</text>
<line x1="945.48" y1="1317.10" x2="945.48" y2="1324.10" stroke="#dedede" stroke-width="2" />
<text x="945.48" y="1346.00" font-size="20.00" fill="#d4d4d4" text-anchor="middle" >0.32</text>
<line x1="1016.70" y1="1317.10" x2="1016.70" y2="1324.10" stroke="#dedede" stroke-width="2" />
<text x="1016.70" y="1346.00" font-size="20.00" fill="#d4d4d4" text-anchor="middle" >0.33</text>
<line x1="707.00" y1="1149.70" x2="715.70" y2="1149.70" stroke="#dedede" stroke-width="2" />
<text x="706.00" y="1157.00" font-size="20.00" fill="#d4d4d4" text-anchor="end" >0.34</text>
<line x1="707.00" y1="1243.70" x2="715.70" y2="1243.70" stroke="#dedede" stroke-width="2" />
<text x="706.00" y="1251.00" font-size="20.00" fill="#d4d4d4" text-anchor="end" >0.32</text>
<rect x="1086.3" y="1040" width="1196.90" height="301.5" fill="#111"/>
<rect x="1087.90" y="1041.40" width="1193.70" height="35.60" fill="url(#thead)" />
<text x="1306.50" y="1065.20" font-size="19.00" fill="#f0f0f0" text-anchor="middle" >0</text>
<text x="1399.50" y="1065.20" font-size="19.00" fill="#f0f0f0" text-anchor="middle" >10</text>
<text x="1492.50" y="1065.20" font-size="19.00" fill="#f0f0f0" text-anchor="middle" >20</text>
<text x="1585.50" y="1065.20" font-size="19.00" fill="#f0f0f0" text-anchor="middle" >30</text>
<text x="1678.50" y="1065.20" font-size="19.00" fill="#f0f0f0" text-anchor="middle" >40</text>
<text x="1771.50" y="1065.20" font-size="19.00" fill="#f0f0f0" text-anchor="middle" >50</text>
<text x="1864.50" y="1065.20" font-size="19.00" fill="#f0f0f0" text-anchor="middle" >60</text>
<text x="1957.50" y="1065.20" font-size="19.00" fill="#f0f0f0" text-anchor="middle" >70</text>
<text x="2050.50" y="1065.20" font-size="19.00" fill="#f0f0f0" text-anchor="middle" >80</text>
<text x="2143.50" y="1065.20" font-size="19.00" fill="#f0f0f0" text-anchor="middle" >90</text>
<text x="2236.50" y="1065.20" font-size="19.00" fill="#f0f0f0" text-anchor="middle" >100</text>
<rect x="1087.90" y="1077.00" width="1193.70" height="33.00" fill="#434343" />
<text x="1101.90" y="1100.80" font-size="20.50" fill="#f2f2f2" font-weight="bold" textLength="66.20" lengthAdjust="spacingAndGlyphs" >x: CIE31</text>
<text x="1265.00" y="1100.80" font-size="20.50" fill="#f2f2f2" textLength="53.80" lengthAdjust="spacingAndGlyphs" >0.0000</text>
<text x="1358.00" y="1100.80" font-size="20.50" fill="#f2f2f2" textLength="53.80" lengthAdjust="spacingAndGlyphs" >0.3097</text>
<text x="1451.00" y="1100.80" font-size="20.50" fill="#f2f2f2" textLength="53.80" lengthAdjust="spacingAndGlyphs" >0.3102</text>
<text x="1544.00" y="1100.80" font-size="20.50" fill="#f2f2f2" textLength="53.80" lengthAdjust="spacingAndGlyphs" >0.3126</text>
<text x="1637.00" y="1100.80" font-size="20.50" fill="#f2f2f2" textLength="53.80" lengthAdjust="spacingAndGlyphs" >0.3131</text>
<text x="1730.00" y="1100.80" font-size="20.50" fill="#f2f2f2" textLength="53.80" lengthAdjust="spacingAndGlyphs" >0.3113</text>
<text x="1823.00" y="1100.80" font-size="20.50" fill="#f2f2f2" textLength="53.80" lengthAdjust="spacingAndGlyphs" >0.3110</text>
<text x="1916.00" y="1100.80" font-size="20.50" fill="#f2f2f2" textLength="53.80" lengthAdjust="spacingAndGlyphs" >0.3120</text>
<text x="2009.00" y="1100.80" font-size="20.50" fill="#f2f2f2" textLength="53.80" lengthAdjust="spacingAndGlyphs" >0.3120</text>
<text x="2102.00" y="1100.80" font-size="20.50" fill="#f2f2f2" textLength="53.80" lengthAdjust="spacingAndGlyphs" >0.3122</text>
<text x="2195.00" y="1100.80" font-size="20.50" fill="#f2f2f2" textLength="53.80" lengthAdjust="spacingAndGlyphs" >0.3112</text>
<rect x="1087.90" y="1110.00" width="1193.70" height="33.00" fill="#808080" />
<text x="1101.90" y="1133.80" font-size="20.50" fill="#f2f2f2" font-weight="bold" textLength="66.20" lengthAdjust="spacingAndGlyphs" >y: CIE31</text>
<text x="1265.00" y="1133.80" font-size="20.50" fill="#f2f2f2" textLength="53.80" lengthAdjust="spacingAndGlyphs" >0.0000</text>
<text x="1358.00" y="1133.80" font-size="20.50" fill="#f2f2f2" textLength="53.80" lengthAdjust="spacingAndGlyphs" >0.3283</text>
<text x="1451.00" y="1133.80" font-size="20.50" fill="#f2f2f2" textLength="53.80" lengthAdjust="spacingAndGlyphs" >0.3298</text>
<text x="1544.00" y="1133.80" font-size="20.50" fill="#f2f2f2" textLength="53.80" lengthAdjust="spacingAndGlyphs" >0.3310</text>
<text x="1637.00" y="1133.80" font-size="20.50" fill="#f2f2f2" textLength="53.80" lengthAdjust="spacingAndGlyphs" >0.3308</text>
<text x="1730.00" y="1133.80" font-size="20.50" fill="#f2f2f2" textLength="53.80" lengthAdjust="spacingAndGlyphs" >0.3301</text>
<text x="1823.00" y="1133.80" font-size="20.50" fill="#f2f2f2" textLength="53.80" lengthAdjust="spacingAndGlyphs" >0.3275</text>
<text x="1916.00" y="1133.80" font-size="20.50" fill="#f2f2f2" textLength="53.80" lengthAdjust="spacingAndGlyphs" >0.3281</text>
<text x="2009.00" y="1133.80" font-size="20.50" fill="#f2f2f2" textLength="53.80" lengthAdjust="spacingAndGlyphs" >0.3270</text>
<text x="2102.00" y="1133.80" font-size="20.50" fill="#f2f2f2" textLength="53.80" lengthAdjust="spacingAndGlyphs" >0.3280</text>
<text x="2195.00" y="1133.80" font-size="20.50" fill="#f2f2f2" textLength="53.80" lengthAdjust="spacingAndGlyphs" >0.3276</text>
<rect x="1087.90" y="1143.00" width="1193.70" height="33.00" fill="#434343" />
<text x="1101.90" y="1166.80" font-size="20.50" fill="#f2f2f2" font-weight="bold" textLength="11.50" lengthAdjust="spacingAndGlyphs" >Y</text>
<text x="1265.00" y="1166.80" font-size="20.50" fill="#f2f2f2" textLength="53.80" lengthAdjust="spacingAndGlyphs" >0.0000</text>
<text x="1358.00" y="1166.80" font-size="20.50" fill="#f2f2f2" textLength="53.80" lengthAdjust="spacingAndGlyphs" >3.8718</text>
<text x="1451.00" y="1166.80" font-size="20.50" fill="#f2f2f2" textLength="63.80" lengthAdjust="spacingAndGlyphs" >12.7961</text>
<text x="1544.00" y="1166.80" font-size="20.50" fill="#f2f2f2" textLength="63.80" lengthAdjust="spacingAndGlyphs" >27.5315</text>
<text x="1637.00" y="1166.80" font-size="20.50" fill="#f2f2f2" textLength="63.80" lengthAdjust="spacingAndGlyphs" >50.7718</text>
<text x="1730.00" y="1166.80" font-size="20.50" fill="#f2f2f2" textLength="63.80" lengthAdjust="spacingAndGlyphs" >81.4467</text>
<text x="1823.00" y="1166.80" font-size="20.50" fill="#f2f2f2" textLength="73.80" lengthAdjust="spacingAndGlyphs" >119.0021</text>
<text x="1916.00" y="1166.80" font-size="20.50" fill="#f2f2f2" textLength="73.80" lengthAdjust="spacingAndGlyphs" >167.0806</text>
<text x="2009.00" y="1166.80" font-size="20.50" fill="#f2f2f2" textLength="73.80" lengthAdjust="spacingAndGlyphs" >227.0092</text>
<text x="2102.00" y="1166.80" font-size="20.50" fill="#f2f2f2" textLength="73.80" lengthAdjust="spacingAndGlyphs" >300.3459</text>
<text x="2195.00" y="1166.80" font-size="20.50" fill="#f2f2f2" textLength="73.80" lengthAdjust="spacingAndGlyphs" >384.3797</text>
<rect x="1087.90" y="1176.00" width="1193.70" height="33.00" fill="#808080" />
<text x="1101.90" y="1199.80" font-size="20.50" fill="#f2f2f2" font-weight="bold" textLength="71.00" lengthAdjust="spacingAndGlyphs" >Target Y</text>
<text x="1265.00" y="1199.80" font-size="20.50" fill="#f2f2f2" textLength="53.80" lengthAdjust="spacingAndGlyphs" >0.0000</text>
<text x="1358.00" y="1199.80" font-size="20.50" fill="#f2f2f2" textLength="53.80" lengthAdjust="spacingAndGlyphs" >3.9706</text>
<text x="1451.00" y="1199.80" font-size="20.50" fill="#f2f2f2" textLength="63.80" lengthAdjust="spacingAndGlyphs" >12.7248</text>
<text x="1544.00" y="1199.80" font-size="20.50" fill="#f2f2f2" textLength="63.80" lengthAdjust="spacingAndGlyphs" >27.7798</text>
<text x="1637.00" y="1199.80" font-size="20.50" fill="#f2f2f2" textLength="63.80" lengthAdjust="spacingAndGlyphs" >51.0719</text>
<text x="1730.00" y="1199.80" font-size="20.50" fill="#f2f2f2" textLength="63.80" lengthAdjust="spacingAndGlyphs" >82.9724</text>
<text x="1823.00" y="1199.80" font-size="20.50" fill="#f2f2f2" textLength="73.80" lengthAdjust="spacingAndGlyphs" >122.4429</text>
<text x="1916.00" y="1199.80" font-size="20.50" fill="#f2f2f2" textLength="73.80" lengthAdjust="spacingAndGlyphs" >171.1263</text>
<text x="2009.00" y="1199.80" font-size="20.50" fill="#f2f2f2" textLength="73.80" lengthAdjust="spacingAndGlyphs" >232.0990</text>
<text x="2102.00" y="1199.80" font-size="20.50" fill="#f2f2f2" textLength="73.80" lengthAdjust="spacingAndGlyphs" >304.1589</text>
<text x="2195.00" y="1199.80" font-size="20.50" fill="#f2f2f2" textLength="73.80" lengthAdjust="spacingAndGlyphs" >384.3797</text>
<rect x="1087.90" y="1209.00" width="1193.70" height="33.00" fill="#434343" />
<text x="1101.90" y="1232.80" font-size="20.50" fill="#f2f2f2" font-weight="bold" textLength="144.00" lengthAdjust="spacingAndGlyphs" >Gamma Log/Log</text>
<text x="1265.00" y="1232.80" font-size="20.50" fill="#f2f2f2" textLength="53.80" lengthAdjust="spacingAndGlyphs" >1.2778</text>
<text x="1358.00" y="1232.80" font-size="20.50" fill="#f2f2f2" textLength="53.80" lengthAdjust="spacingAndGlyphs" >2.0138</text>
<text x="1451.00" y="1232.80" font-size="20.50" fill="#f2f2f2" textLength="53.80" lengthAdjust="spacingAndGlyphs" >2.1141</text>
<text x="1544.00" y="1232.80" font-size="20.50" fill="#f2f2f2" textLength="53.80" lengthAdjust="spacingAndGlyphs" >2.1778</text>
<text x="1637.00" y="1232.80" font-size="20.50" fill="#f2f2f2" textLength="53.80" lengthAdjust="spacingAndGlyphs" >2.2092</text>
<text x="1730.00" y="1232.80" font-size="20.50" fill="#f2f2f2" textLength="53.80" lengthAdjust="spacingAndGlyphs" >2.2513</text>
<text x="1823.00" y="1232.80" font-size="20.50" fill="#f2f2f2" textLength="53.80" lengthAdjust="spacingAndGlyphs" >2.2953</text>
<text x="1916.00" y="1232.80" font-size="20.50" fill="#f2f2f2" textLength="53.80" lengthAdjust="spacingAndGlyphs" >2.3177</text>
<text x="2009.00" y="1232.80" font-size="20.50" fill="#f2f2f2" textLength="53.80" lengthAdjust="spacingAndGlyphs" >2.3601</text>
<text x="2102.00" y="1232.80" font-size="20.50" fill="#f2f2f2" textLength="53.80" lengthAdjust="spacingAndGlyphs" >2.3908</text>
<text x="2195.00" y="1232.80" font-size="20.50" fill="#f2f2f2" textLength="53.80" lengthAdjust="spacingAndGlyphs" >2.2749</text>
<rect x="1087.90" y="1242.00" width="1193.70" height="33.00" fill="#808080" />
<text x="1101.90" y="1265.80" font-size="20.50" fill="#f2f2f2" font-weight="bold" textLength="33.50" lengthAdjust="spacingAndGlyphs" >CCT</text>
<text x="1265.00" y="1265.80" font-size="20.50" fill="#f2f2f2" textLength="83.80" lengthAdjust="spacingAndGlyphs" >2315.0000</text>
<text x="1358.00" y="1265.80" font-size="20.50" fill="#f2f2f2" textLength="83.80" lengthAdjust="spacingAndGlyphs" >6676.0000</text>
<text x="1451.00" y="1265.80" font-size="20.50" fill="#f2f2f2" textLength="83.80" lengthAdjust="spacingAndGlyphs" >6637.0000</text>
<text x="1544.00" y="1265.80" font-size="20.50" fill="#f2f2f2" textLength="83.80" lengthAdjust="spacingAndGlyphs" >6497.0000</text>
<text x="1637.00" y="1265.80" font-size="20.50" fill="#f2f2f2" textLength="83.80" lengthAdjust="spacingAndGlyphs" >6467.0000</text>
<text x="1730.00" y="1265.80" font-size="20.50" fill="#f2f2f2" textLength="83.80" lengthAdjust="spacingAndGlyphs" >6570.0000</text>
<text x="1823.00" y="1265.80" font-size="20.50" fill="#f2f2f2" textLength="83.80" lengthAdjust="spacingAndGlyphs" >6609.0000</text>
<text x="1916.00" y="1265.80" font-size="20.50" fill="#f2f2f2" textLength="83.80" lengthAdjust="spacingAndGlyphs" >6548.0000</text>
<text x="2009.00" y="1265.80" font-size="20.50" fill="#f2f2f2" textLength="83.80" lengthAdjust="spacingAndGlyphs" >6560.0000</text>
<text x="2102.00" y="1265.80" font-size="20.50" fill="#f2f2f2" textLength="83.80" lengthAdjust="spacingAndGlyphs" >6541.0000</text>
<text x="2195.00" y="1265.80" font-size="20.50" fill="#f2f2f2" textLength="83.80" lengthAdjust="spacingAndGlyphs" >6598.0000</text>
<rect x="1087.90" y="1275.00" width="1193.70" height="33.00" fill="#434343" />
<text x="1101.90" y="1298.80" font-size="20.50" fill="#f2f2f2" font-weight="bold" textLength="70.50" lengthAdjust="spacingAndGlyphs" >ΔE 2000</text>
<text x="1265.00" y="1298.80" font-size="20.50" fill="#f2f2f2" textLength="53.80" lengthAdjust="spacingAndGlyphs" >0.0734</text>
<text x="1358.00" y="1298.80" font-size="20.50" fill="#f2f2f2" textLength="53.80" lengthAdjust="spacingAndGlyphs" >0.4606</text>
<text x="1451.00" y="1298.80" font-size="20.50" fill="#f2f2f2" textLength="53.80" lengthAdjust="spacingAndGlyphs" >0.8238</text>
<text x="1544.00" y="1298.80" font-size="20.50" fill="#f2f2f2" textLength="53.80" lengthAdjust="spacingAndGlyphs" >0.7508</text>
<text x="1637.00" y="1298.80" font-size="20.50" fill="#f2f2f2" textLength="53.80" lengthAdjust="spacingAndGlyphs" >0.6444</text>
<text x="1730.00" y="1298.80" font-size="20.50" fill="#f2f2f2" textLength="53.80" lengthAdjust="spacingAndGlyphs" >1.1779</text>
<text x="1823.00" y="1298.80" font-size="20.50" fill="#f2f2f2" textLength="53.80" lengthAdjust="spacingAndGlyphs" >0.8864</text>
<text x="1916.00" y="1298.80" font-size="20.50" fill="#f2f2f2" textLength="53.80" lengthAdjust="spacingAndGlyphs" >0.6419</text>
<text x="2009.00" y="1298.80" font-size="20.50" fill="#f2f2f2" textLength="53.80" lengthAdjust="spacingAndGlyphs" >1.2106</text>
<text x="2102.00" y="1298.80" font-size="20.50" fill="#f2f2f2" textLength="53.80" lengthAdjust="spacingAndGlyphs" >0.6166</text>
<text x="2195.00" y="1298.80" font-size="20.50" fill="#f2f2f2" textLength="53.80" lengthAdjust="spacingAndGlyphs" >0.8173</text>
<rect x="1087.90" y="1308.00" width="1193.70" height="33.00" fill="#808080" />
<text x="1101.90" y="1331.80" font-size="20.50" fill="#f2f2f2" font-weight="bold" textLength="56.00" lengthAdjust="spacingAndGlyphs" >ΔE ITP</text>
<text x="1265.00" y="1331.80" font-size="20.50" fill="#f2f2f2" textLength="63.80" lengthAdjust="spacingAndGlyphs" >43.3187</text>
<text x="1358.00" y="1331.80" font-size="20.50" fill="#f2f2f2" textLength="53.80" lengthAdjust="spacingAndGlyphs" >1.7511</text>
<text x="1451.00" y="1331.80" font-size="20.50" fill="#f2f2f2" textLength="53.80" lengthAdjust="spacingAndGlyphs" >1.5323</text>
<text x="1544.00" y="1331.80" font-size="20.50" fill="#f2f2f2" textLength="53.80" lengthAdjust="spacingAndGlyphs" >1.0654</text>
<text x="1637.00" y="1331.80" font-size="20.50" fill="#f2f2f2" textLength="53.80" lengthAdjust="spacingAndGlyphs" >0.7957</text>
<text x="1730.00" y="1331.80" font-size="20.50" fill="#f2f2f2" textLength="53.80" lengthAdjust="spacingAndGlyphs" >1.8137</text>
<text x="1823.00" y="1331.80" font-size="20.50" fill="#f2f2f2" textLength="53.80" lengthAdjust="spacingAndGlyphs" >2.2790</text>
<text x="1916.00" y="1331.80" font-size="20.50" fill="#f2f2f2" textLength="53.80" lengthAdjust="spacingAndGlyphs" >1.8221</text>
<text x="2009.00" y="1331.80" font-size="20.50" fill="#f2f2f2" textLength="53.80" lengthAdjust="spacingAndGlyphs" >1.8289</text>
<text x="2102.00" y="1331.80" font-size="20.50" fill="#f2f2f2" textLength="53.80" lengthAdjust="spacingAndGlyphs" >1.0398</text>
<text x="2195.00" y="1331.80" font-size="20.50" fill="#f2f2f2" textLength="53.80" lengthAdjust="spacingAndGlyphs" >0.9142</text>
<rect x="200.00" y="1489.50" width="2360.00" height="62.50" fill="#222222" />
<rect x="1873.00" y="1489.50" width="687.00" height="62.50" fill="url(#bbar)" />
<rect x="200.80" y="1489.9" width="150" height="62" rx="4" fill="url(#btn)"/>
<rect x="205.80" y="1495.3" width="140" height="35.7" rx="3" fill="rgb(0,0,0)" stroke="#5a5a5a" stroke-width="0.6"/>
<text x="275.80" y="1545.70" font-size="11.50" fill="#262626" text-anchor="middle" stroke="#262626" stroke-width="0.35">0</text>
<rect x="352.82" y="1489.9" width="150" height="62" rx="4" fill="url(#btn)"/>
<rect x="357.82" y="1495.3" width="140" height="35.7" rx="3" fill="rgb(26,26,26)" stroke="#5a5a5a" stroke-width="0.6"/>
<text x="427.82" y="1545.70" font-size="11.50" fill="#262626" text-anchor="middle" stroke="#262626" stroke-width="0.35">10</text>
<rect x="504.84" y="1489.9" width="150" height="62" rx="4" fill="url(#btn)"/>
<rect x="509.84" y="1495.3" width="140" height="35.7" rx="3" fill="rgb(51,51,51)" stroke="#5a5a5a" stroke-width="0.6"/>
<text x="579.84" y="1545.70" font-size="11.50" fill="#262626" text-anchor="middle" stroke="#262626" stroke-width="0.35">20</text>
<rect x="656.86" y="1489.9" width="150" height="62" rx="4" fill="url(#btn)"/>
<rect x="661.86" y="1495.3" width="140" height="35.7" rx="3" fill="rgb(76,76,76)" stroke="#5a5a5a" stroke-width="0.6"/>
<text x="731.86" y="1545.70" font-size="11.50" fill="#262626" text-anchor="middle" stroke="#262626" stroke-width="0.35">30</text>
<rect x="808.88" y="1489.9" width="150" height="62" rx="4" fill="url(#btn)"/>
<rect x="813.88" y="1495.3" width="140" height="35.7" rx="3" fill="rgb(102,102,102)" stroke="#5a5a5a" stroke-width="0.6"/>
<text x="883.88" y="1545.70" font-size="11.50" fill="#262626" text-anchor="middle" stroke="#262626" stroke-width="0.35">40</text>
<rect x="960.90" y="1489.9" width="150" height="62" rx="4" fill="url(#btn)"/>
<rect x="965.90" y="1495.3" width="140" height="35.7" rx="3" fill="rgb(128,128,128)" stroke="#5a5a5a" stroke-width="0.6"/>
<text x="1035.90" y="1545.70" font-size="11.50" fill="#262626" text-anchor="middle" stroke="#262626" stroke-width="0.35">50</text>
<rect x="1112.92" y="1489.9" width="150" height="62" rx="4" fill="url(#btn)"/>
<rect x="1117.92" y="1495.3" width="140" height="35.7" rx="3" fill="rgb(153,153,153)" stroke="#5a5a5a" stroke-width="0.6"/>
<text x="1187.92" y="1545.70" font-size="11.50" fill="#262626" text-anchor="middle" stroke="#262626" stroke-width="0.35">60</text>
<rect x="1264.94" y="1489.9" width="150" height="62" rx="4" fill="url(#btn)"/>
<rect x="1269.94" y="1495.3" width="140" height="35.7" rx="3" fill="rgb(178,178,178)" stroke="#5a5a5a" stroke-width="0.6"/>
<text x="1339.94" y="1545.70" font-size="11.50" fill="#262626" text-anchor="middle" stroke="#262626" stroke-width="0.35">70</text>
<rect x="1416.96" y="1489.9" width="150" height="62" rx="4" fill="url(#btn)"/>
<rect x="1421.96" y="1495.3" width="140" height="35.7" rx="3" fill="rgb(204,204,204)" stroke="#5a5a5a" stroke-width="0.6"/>
<text x="1491.96" y="1545.70" font-size="11.50" fill="#262626" text-anchor="middle" stroke="#262626" stroke-width="0.35">80</text>
<rect x="1568.98" y="1489.9" width="150" height="62" rx="4" fill="url(#btn)"/>
<rect x="1573.98" y="1495.3" width="140" height="35.7" rx="3" fill="rgb(230,230,230)" stroke="#5a5a5a" stroke-width="0.6"/>
<text x="1643.98" y="1545.70" font-size="11.50" fill="#262626" text-anchor="middle" stroke="#262626" stroke-width="0.35">90</text>
<rect x="1721.00" y="1489.9" width="150" height="62" rx="4" fill="url(#btnsel)"/>
<rect x="1726.00" y="1495.3" width="140" height="35.7" rx="3" fill="#ffffff"/>
<text x="1796.00" y="1545.70" font-size="11.50" fill="#f0f0f0" text-anchor="middle" font-weight="bold" >100</text>
<rect x="2237" y="1507.5" width="48" height="46" rx="4" fill="url(#sbtn)"/>
<rect x="2246.5" y="1515.5" width="28.5" height="28.5" rx="3.5" fill="none" stroke="#2a2a2a" stroke-width="2.6"/>
<rect x="2254.60" y="1523.30" width="13.00" height="13.00" fill="#000" />
<rect x="2286" y="1490" width="278" height="30" rx="4" fill="url(#sbtn)"/>
<line x1="2332.40" y1="1490.00" x2="2332.40" y2="1520.00" stroke="#5c5c5c" stroke-width="1.2" />
<line x1="2377.50" y1="1490.00" x2="2377.50" y2="1520.00" stroke="#5c5c5c" stroke-width="1.2" />
<line x1="2422.50" y1="1490.00" x2="2422.50" y2="1520.00" stroke="#5c5c5c" stroke-width="1.2" />
<line x1="2467.30" y1="1490.00" x2="2467.30" y2="1520.00" stroke="#5c5c5c" stroke-width="1.2" />
<line x1="2512.30" y1="1490.00" x2="2512.30" y2="1520.00" stroke="#5c5c5c" stroke-width="1.2" />
<circle cx="2309" cy="1511" r="9" fill="#8c8c8c" opacity="0.6"/>
<circle cx="2354.9" cy="1511" r="9" fill="#8c8c8c" opacity="0.6"/>
<circle cx="2400" cy="1511" r="9" fill="#8c8c8c" opacity="0.6"/>
<circle cx="2444.9" cy="1511" r="9" fill="#8c8c8c" opacity="0.6"/>
<circle cx="2489.8" cy="1511" r="9" fill="#8c8c8c" opacity="0.6"/>
<circle cx="2536" cy="1511" r="9" fill="#8c8c8c" opacity="0.6"/>
<rect x="2286" y="1520.6" width="274" height="33" rx="4" fill="url(#nbtn)"/>
<line x1="2422.20" y1="1521.00" x2="2422.20" y2="1552.00" stroke="#6a6a6a" stroke-width="1.4" />
<circle cx="2316.7" cy="1536" r="9.5" fill="url(#nc)"/>
<circle cx="2530" cy="1536" r="9.5" fill="url(#nc)"/>
<text x="2316.70" y="1541.50" font-size="17.00" fill="#333" text-anchor="middle" >«</text>
<text x="2530.50" y="1541.50" font-size="17.00" fill="#333" text-anchor="middle" >»</text>
<text x="2343.40" y="1544.20" font-size="22.00" fill="#333" textLength="50.50" lengthAdjust="spacingAndGlyphs" >Back</text>
<text x="2450.60" y="1544.20" font-size="22.00" fill="#333" textLength="51.00" lengthAdjust="spacingAndGlyphs" >Next</text>
<g>
<path d="M2176,1470 L2226,1482 L2228,1511 L2188,1514" fill="none" stroke="#c8c8c8" stroke-opacity="0.8" stroke-width="7.5" stroke-linejoin="round" stroke-linecap="round"/>
<path d="M2176,1470 L2178,1519 L2208,1536 L2262,1518 L2232,1512" fill="none" stroke="#c8c8c8" stroke-opacity="0.8" stroke-width="7.5" stroke-linejoin="round" stroke-linecap="round"/>
<path d="M2176,1470 L2226,1482 L2228,1511 L2188,1514" fill="none" stroke="#7c2830" stroke-opacity="0.95" stroke-width="4.8" stroke-linejoin="round" stroke-linecap="round"/>
<path d="M2176,1470 L2178,1519 L2208,1536 L2262,1518 L2232,1512" fill="none" stroke="#7c2830" stroke-opacity="0.95" stroke-width="4.8" stroke-linejoin="round" stroke-linecap="round"/>
<path d="M2190,1487 Q2196,1482 2200,1490 L2204.5,1506 L2232,1469.5" fill="none" stroke="#c8c8c8" stroke-opacity="0.8" stroke-width="7" stroke-linejoin="round" stroke-linecap="round"/>
<path d="M2190,1487 Q2196,1482 2200,1490 L2204.5,1506 L2232,1469.5" fill="none" stroke="#2e2e2e" stroke-width="4.2" stroke-linejoin="round" stroke-linecap="round"/>
<text x="2233" y="1508.4" font-size="37" font-weight="bold" fill="none" stroke="#d0d0d0" stroke-opacity="0.85" stroke-width="5" stroke-linejoin="round" textLength="199.5" lengthAdjust="spacingAndGlyphs">NOTEBOOK</text>
<text x="2433" y="1508.4" font-size="37" font-weight="bold" fill="none" stroke="#d0d0d0" stroke-opacity="0.85" stroke-width="5" stroke-linejoin="round" textLength="116.5" lengthAdjust="spacingAndGlyphs">CHECK</text>
<g opacity="0.75"><text x="2233" y="1508.4" font-size="37" font-weight="bold" fill="#8a2a34" stroke="#8a2a34" stroke-width="1.6" stroke-linejoin="round" textLength="199.5" lengthAdjust="spacingAndGlyphs">NOTEBOOK</text></g>
<g opacity="0.6"><text x="2433" y="1508.4" font-size="37" font-weight="bold" fill="#2a2a2a" stroke="#2a2a2a" stroke-width="1.6" stroke-linejoin="round" textLength="116.5" lengthAdjust="spacingAndGlyphs">CHECK</text></g>
</g></svg></body></html>
